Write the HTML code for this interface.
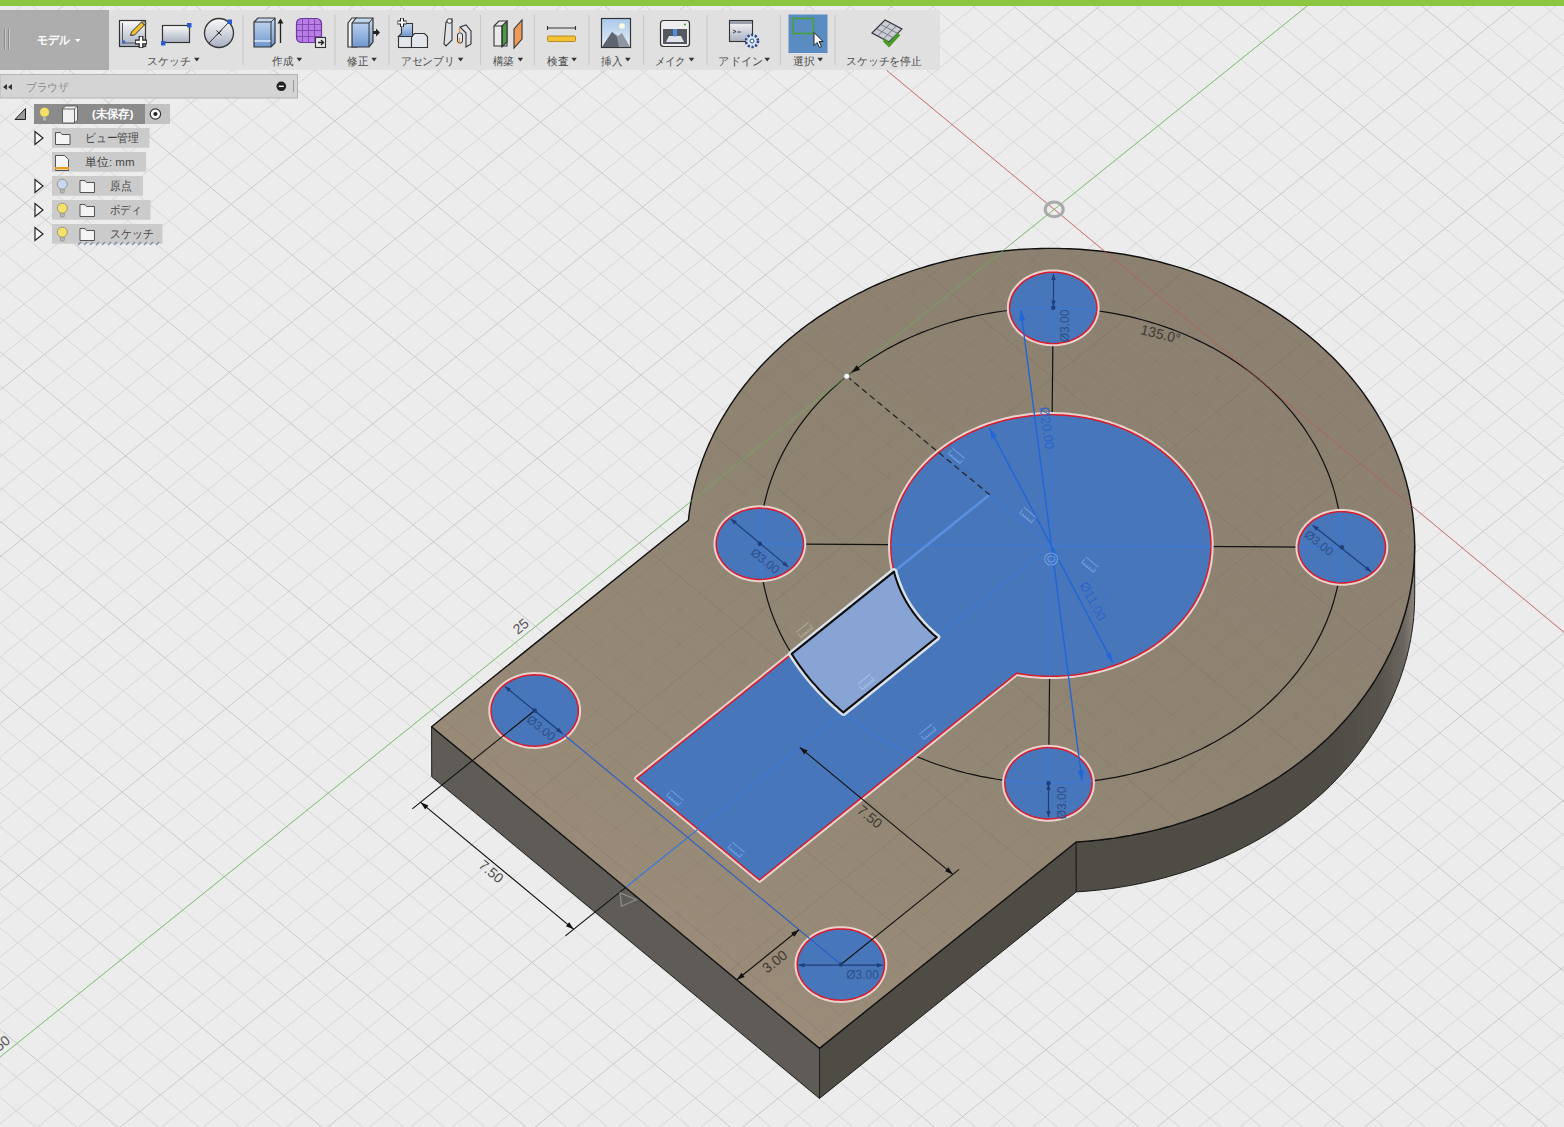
<!DOCTYPE html>
<html><head><meta charset="utf-8"><style>
html,body{margin:0;padding:0;width:1564px;height:1127px;overflow:hidden;background:#ececec;font-family:"Liberation Sans",sans-serif}
</style></head><body>
<svg width="1564" height="1127" viewBox="0 0 1564 1127" style="position:absolute;left:0;top:0">
<defs>
<clipPath id="topclip"><path d="M431.6 726.7 L819.5 1048.4 L1076.2 842 L1081.7 841.6 L1087.2 841.2 L1092.7 840.7 L1098.2 840.1 L1103.7 839.5 L1109.1 838.8 L1114.6 838.1 L1120 837.2 L1125.4 836.3 L1130.8 835.4 L1136.2 834.3 L1141.6 833.3 L1146.9 832.1 L1152.2 830.9 L1157.5 829.6 L1162.8 828.2 L1168.1 826.8 L1173.3 825.3 L1178.5 823.7 L1183.6 822.1 L1188.7 820.4 L1193.8 818.7 L1198.9 816.9 L1203.9 815 L1208.9 813.1 L1213.9 811.1 L1218.8 809 L1223.7 806.9 L1228.5 804.7 L1233.3 802.5 L1238.1 800.2 L1242.8 797.9 L1247.5 795.4 L1252.1 793 L1256.7 790.4 L1261.2 787.9 L1265.7 785.2 L1270.1 782.5 L1274.5 779.8 L1278.9 777 L1283.1 774.1 L1287.4 771.2 L1291.5 768.2 L1295.6 765.2 L1299.7 762.2 L1303.7 759 L1307.7 755.9 L1311.5 752.7 L1315.4 749.4 L1319.1 746.1 L1322.8 742.8 L1326.5 739.4 L1330 735.9 L1333.6 732.4 L1337 728.9 L1340.4 725.3 L1343.7 721.7 L1346.9 718.1 L1350.1 714.4 L1353.2 710.6 L1356.3 706.9 L1359.2 703 L1362.1 699.2 L1364.9 695.3 L1367.7 691.4 L1370.4 687.5 L1373 683.5 L1375.5 679.5 L1378 675.4 L1380.3 671.3 L1382.7 667.2 L1384.9 663.1 L1387 658.9 L1389.1 654.8 L1391.1 650.6 L1393 646.3 L1394.9 642.1 L1396.6 637.8 L1398.3 633.5 L1399.9 629.2 L1401.4 624.8 L1402.8 620.5 L1404.2 616.1 L1405.5 611.7 L1406.7 607.3 L1407.8 602.9 L1408.8 598.4 L1409.8 594 L1410.6 589.5 L1411.4 585.1 L1412.1 580.6 L1412.7 576.1 L1413.2 571.6 L1413.7 567.1 L1414 562.6 L1414.3 558.1 L1414.5 553.6 L1414.6 549.1 L1414.7 544.6 L1414.6 540 L1414.5 535.5 L1414.2 531 L1413.9 526.5 L1413.5 522 L1413.1 517.5 L1412.5 513 L1411.9 508.5 L1411.1 504.1 L1410.3 499.6 L1409.4 495.2 L1408.5 490.7 L1407.4 486.3 L1406.3 481.9 L1405 477.5 L1403.7 473.1 L1402.3 468.7 L1400.9 464.4 L1399.3 460 L1397.7 455.7 L1396 451.4 L1394.2 447.2 L1392.4 442.9 L1390.4 438.7 L1388.4 434.5 L1386.3 430.3 L1384.1 426.2 L1381.9 422 L1379.5 418 L1377.1 413.9 L1374.6 409.9 L1372.1 405.9 L1369.4 401.9 L1366.7 398 L1364 394.1 L1361.1 390.2 L1358.2 386.4 L1355.2 382.6 L1352.1 378.8 L1349 375.1 L1345.8 371.4 L1342.5 367.8 L1339.2 364.2 L1335.8 360.6 L1332.3 357.1 L1328.8 353.7 L1325.2 350.2 L1321.5 346.9 L1317.8 343.5 L1314 340.2 L1310.2 337 L1306.3 333.8 L1302.3 330.7 L1298.3 327.6 L1294.2 324.5 L1290.1 321.5 L1285.9 318.6 L1281.6 315.7 L1277.3 312.9 L1273 310.1 L1268.6 307.4 L1264.1 304.7 L1259.6 302.1 L1255.1 299.5 L1250.5 297 L1245.9 294.6 L1241.2 292.2 L1236.4 289.9 L1231.7 287.6 L1226.8 285.4 L1222 283.2 L1217.1 281.1 L1212.2 279.1 L1207.2 277.1 L1202.2 275.2 L1197.1 273.4 L1192.1 271.6 L1187 269.9 L1181.8 268.2 L1176.6 266.7 L1171.4 265.1 L1166.2 263.7 L1161 262.3 L1155.7 260.9 L1150.4 259.7 L1145.1 258.5 L1139.7 257.3 L1134.3 256.3 L1129 255.3 L1123.5 254.3 L1118.1 253.5 L1112.7 252.7 L1107.2 252 L1101.8 251.3 L1096.3 250.7 L1090.8 250.2 L1085.3 249.7 L1079.8 249.3 L1074.3 249 L1068.8 248.7 L1063.3 248.6 L1057.7 248.4 L1052.2 248.4 L1046.7 248.4 L1041.2 248.5 L1035.6 248.7 L1030.1 248.9 L1024.6 249.2 L1019.1 249.5 L1013.6 250 L1008.1 250.5 L1002.6 251 L997.1 251.7 L991.7 252.4 L986.2 253.2 L980.8 254 L975.4 254.9 L970 255.9 L964.6 256.9 L959.3 258 L953.9 259.2 L948.6 260.4 L943.3 261.7 L938.1 263.1 L932.8 264.5 L927.6 266 L922.4 267.6 L917.3 269.2 L912.1 270.9 L907.1 272.7 L902 274.5 L897 276.4 L892 278.3 L887 280.3 L882.1 282.4 L877.2 284.5 L872.4 286.7 L867.6 288.9 L862.9 291.3 L858.1 293.6 L853.5 296 L848.9 298.5 L844.3 301.1 L839.8 303.6 L835.3 306.3 L830.9 309 L826.5 311.8 L822.2 314.6 L817.9 317.4 L813.7 320.4 L809.5 323.3 L805.4 326.3 L801.4 329.4 L797.4 332.5 L793.4 335.7 L789.6 338.9 L785.7 342.2 L782 345.5 L778.3 348.9 L774.7 352.3 L771.1 355.7 L767.6 359.2 L764.2 362.8 L760.8 366.3 L757.5 370 L754.3 373.6 L751.1 377.3 L748 381.1 L745 384.8 L742 388.7 L739.1 392.5 L736.3 396.4 L733.6 400.3 L730.9 404.3 L728.3 408.3 L725.8 412.3 L723.4 416.3 L721 420.4 L718.7 424.5 L716.5 428.6 L714.3 432.8 L712.3 437 L710.3 441.2 L708.4 445.4 L706.6 449.7 L704.8 454 L703.2 458.3 L701.6 462.6 L700.1 467 L698.6 471.3 L697.3 475.7 L696 480.1 L694.9 484.5 L693.8 488.9 L692.7 493.4 L691.8 497.8 L691 502.3 L690.2 506.7 L689.5 511.2 L688.9 515.7 L688.4 520.2 L431.6 726.7 Z"/></clipPath>
<linearGradient id="cyl" x1="1076" y1="0" x2="1414" y2="0" gradientUnits="userSpaceOnUse"><stop offset="0" stop-color="#504c46"/><stop offset="0.75" stop-color="#4f4b45"/><stop offset="0.9" stop-color="#57534d"/><stop offset="0.97" stop-color="#6a665f"/><stop offset="1" stop-color="#8a857c"/></linearGradient><linearGradient id="topg" x1="1150" y1="260" x2="700" y2="1000" gradientUnits="userSpaceOnUse"><stop offset="0" stop-color="#8c8070"/><stop offset="0.45" stop-color="#8f8472"/><stop offset="1" stop-color="#9a8c79"/></linearGradient>
</defs>
<g fill="none">
<path d="M-739.7 551.5L795.5 -683.1M-719.3 568.4L815.9 -666.2M-698.9 585.3L836.4 -649.3M-658 619.2L877.2 -615.4M-637.6 636.1L897.6 -598.5M-617.2 653.1L918 -581.5M-596.8 670L938.4 -564.6M-556 703.9L979.2 -530.7M-535.6 720.8L999.7 -513.8M-515.2 737.7L1020.1 -496.9M-494.7 754.7L1040.5 -479.9M-453.9 788.5L1081.3 -446M-433.5 805.5L1101.7 -429.1M-413.1 822.4L1122.1 -412.2M-392.7 839.3L1142.5 -395.2M-351.9 873.2L1183.4 -361.4M-331.5 890.1L1203.8 -344.4M-311 907.1L1224.2 -327.5M-290.6 924L1244.6 -310.6M-249.8 957.9L1285.4 -276.7M-229.4 974.8L1305.8 -259.8M-209 991.7L1326.2 -242.8M-188.6 1008.7L1346.7 -225.9M-147.7 1042.5L1387.5 -192M-127.3 1059.5L1407.9 -175.1M-106.9 1076.4L1428.3 -158.2M-86.5 1093.3L1448.7 -141.2M-45.7 1127.2L1489.5 -107.4M-25.3 1144.1L1509.9 -90.4M-4.9 1161.1L1530.4 -73.5M15.5 1178L1550.8 -56.6M56.4 1211.9L1591.6 -22.7M76.8 1228.8L1612 -5.8M97.2 1245.8L1632.4 11.2M117.6 1262.7L1652.8 28.1M158.4 1296.6L1693.7 62M178.8 1313.5L1714.1 78.9M199.3 1330.4L1734.5 95.8M219.7 1347.4L1754.9 112.8M260.5 1381.2L1795.7 146.6M280.9 1398.2L1816.1 163.6M301.3 1415.1L1836.5 180.5M321.7 1432L1857 197.4M362.6 1465.9L1897.8 231.3M383 1482.8L1918.2 248.2M403.4 1499.8L1938.6 265.2M423.8 1516.7L1959 282.1M464.6 1550.6L1999.8 316M485 1567.5L2020.2 332.9M505.4 1584.4L2040.7 349.9M525.8 1601.4L2061.1 366.8M566.7 1635.2L2101.9 400.7M587.1 1652.2L2122.3 417.6M607.5 1669.1L2142.7 434.5M627.9 1686L2163.1 451.5M668.7 1719.9L2204 485.3M689.1 1736.8L2224.4 502.3M709.6 1753.8L2244.8 519.2M730 1770.7L2265.2 536.1M770.8 1804.6L2306 570M-739.7 551.5L770.8 1804.6M-718.9 534.8L791.5 1787.9M-698.2 518.1L812.3 1771.2M-677.5 501.4L833 1754.5M-636 468L874.5 1721.2M-615.2 451.4L895.3 1704.5M-594.5 434.7L916 1687.8M-573.7 418L936.8 1671.1M-532.2 384.6L978.3 1637.7M-511.5 367.9L999 1621.1M-490.7 351.3L1019.7 1604.4M-470 334.6L1040.5 1587.7M-428.5 301.2L1082 1554.3M-407.8 284.5L1102.7 1537.6M-387 267.8L1123.5 1521M-366.3 251.2L1144.2 1504.3M-324.8 217.8L1185.7 1470.9M-304 201.1L1206.5 1454.2M-283.3 184.4L1227.2 1437.5M-262.5 167.7L1248 1420.9M-221 134.4L1289.4 1387.5M-200.3 117.7L1310.2 1370.8M-179.5 101L1330.9 1354.1M-158.8 84.3L1351.7 1337.4M-117.3 50.9L1393.2 1304.1M-96.6 34.3L1413.9 1287.4M-75.8 17.6L1434.7 1270.7M-55.1 0.9L1455.4 1254M-13.6 -32.5L1496.9 1220.7M7.2 -49.2L1517.7 1204M27.9 -65.8L1538.4 1187.3M48.7 -82.5L1559.1 1170.6M90.2 -115.9L1600.6 1137.2M110.9 -132.6L1621.4 1120.5M131.7 -149.3L1642.1 1103.9M152.4 -165.9L1662.9 1087.2M193.9 -199.3L1704.4 1053.8M214.6 -216L1725.1 1037.1M235.4 -232.7L1745.9 1020.4M256.1 -249.4L1766.6 1003.8M297.6 -282.7L1808.1 970.4M318.4 -299.4L1828.8 953.7M339.1 -316.1L1849.6 937M359.9 -332.8L1870.3 920.3M401.4 -366.1L1911.8 887M422.1 -382.8L1932.6 870.3M442.8 -399.5L1953.3 853.6M463.6 -416.2L1974.1 836.9M505.1 -449.6L2015.6 803.6M525.8 -466.2L2036.3 786.9M546.6 -482.9L2057.1 770.2M567.3 -499.6L2077.8 753.5M608.8 -533L2119.3 720.1M629.6 -549.7L2140 703.5M650.3 -566.3L2160.8 686.8M671.1 -583L2181.5 670.1M712.5 -616.4L2223 636.7M733.3 -633.1L2243.8 620M754 -649.8L2264.5 603.4M774.8 -666.4L2285.3 586.7" stroke="#d7d7d7" stroke-width="1"/>
<path d="M-678.5 602.3L856.8 -632.3M-576.4 686.9L958.8 -547.7M-474.3 771.6L1060.9 -463M-372.3 856.3L1162.9 -378.3M-270.2 940.9L1265 -293.6M-168.2 1025.6L1367.1 -209M-66.1 1110.3L1469.1 -124.3M36 1194.9L1571.2 -39.6M138 1279.6L1673.2 45M240.1 1364.3L1775.3 129.7M342.1 1449L1877.4 214.4M444.2 1533.6L1979.4 299M546.3 1618.3L2081.5 383.7M648.3 1703L2183.5 468.4M750.4 1787.6L2285.6 553.1M-656.7 484.7L853.8 1737.8M-553 401.3L957.5 1654.4M-449.2 317.9L1061.2 1571M-345.5 234.5L1165 1487.6M-241.8 151.1L1268.7 1404.2M-138 67.6L1372.4 1320.8M-34.3 -15.8L1476.2 1237.3M69.4 -99.2L1579.9 1153.9M173.1 -182.6L1683.6 1070.5M276.9 -266L1787.4 987.1M380.6 -349.5L1891.1 903.7M484.3 -432.9L1994.8 820.2M588.1 -516.3L2098.5 736.8M691.8 -599.7L2202.3 653.4M795.5 -683.1L2306 570" stroke="#c9c9c9" stroke-width="1"/>
</g>
<path d="M431.6 726.7 L819.5 1048.4 L819.5 1098.4 L431.7 776.6 Z" fill="#5f5c57" stroke="#1e1e1e" stroke-width="1"/>
<path d="M819.5 1048.4 L1076.2 842 L1076.3 891.9 L819.5 1098.4 Z" fill="#4f4b45" stroke="#1e1e1e" stroke-width="1"/>
<path d="M1076.2 842 L1083 841.5 L1089.8 841 L1096.6 840.3 L1103.4 839.6 L1110.1 838.7 L1116.8 837.7 L1123.5 836.7 L1130.2 835.5 L1136.9 834.2 L1143.5 832.9 L1150.1 831.4 L1156.6 829.8 L1163.1 828.1 L1169.6 826.4 L1176 824.5 L1182.4 822.5 L1188.8 820.4 L1195 818.3 L1201.3 816 L1207.5 813.7 L1213.6 811.2 L1219.7 808.7 L1225.7 806 L1231.7 803.3 L1237.5 800.5 L1243.4 797.6 L1249.1 794.6 L1254.8 791.5 L1260.4 788.3 L1266 785.1 L1271.4 781.7 L1276.8 778.3 L1282.1 774.8 L1287.4 771.2 L1292.5 767.5 L1297.6 763.8 L1302.5 760 L1307.4 756.1 L1312.2 752.1 L1316.9 748.1 L1321.5 743.9 L1326 739.8 L1330.5 735.5 L1334.8 731.2 L1339 726.8 L1343.1 722.3 L1347.1 717.8 L1351 713.3 L1354.8 708.6 L1358.5 703.9 L1362.1 699.2 L1365.6 694.4 L1369 689.5 L1372.2 684.6 L1375.4 679.7 L1378.4 674.7 L1381.3 669.7 L1384.1 664.6 L1386.8 659.4 L1389.3 654.3 L1391.8 649.1 L1394.1 643.8 L1396.3 638.5 L1398.4 633.2 L1400.3 627.9 L1402.2 622.5 L1403.9 617.1 L1405.5 611.7 L1406.9 606.2 L1408.3 600.8 L1409.5 595.3 L1410.6 589.8 L1411.5 584.3 L1412.4 578.7 L1413.1 573.2 L1413.6 567.6 L1414.1 562.1 L1414.4 556.5 L1414.6 550.9 L1414.7 545.3 L1414.7 595.3 L1414.6 600.9 L1414.4 606.5 L1414.1 612 L1413.7 617.6 L1413.1 623.1 L1412.4 628.7 L1411.5 634.2 L1410.6 639.7 L1409.5 645.3 L1408.3 650.7 L1407 656.2 L1405.5 661.7 L1403.9 667.1 L1402.2 672.5 L1400.4 677.8 L1398.4 683.2 L1396.3 688.5 L1394.1 693.8 L1391.8 699 L1389.4 704.2 L1386.8 709.4 L1384.1 714.5 L1381.3 719.6 L1378.4 724.7 L1375.4 729.7 L1372.2 734.6 L1369 739.5 L1365.6 744.4 L1362.1 749.2 L1358.6 753.9 L1354.9 758.6 L1351.1 763.2 L1347.1 767.8 L1343.1 772.3 L1339 776.8 L1334.8 781.1 L1330.5 785.5 L1326.1 789.7 L1321.6 793.9 L1316.9 798 L1312.2 802.1 L1307.5 806 L1302.6 809.9 L1297.6 813.8 L1292.5 817.5 L1287.4 821.2 L1282.2 824.8 L1276.9 828.3 L1271.5 831.7 L1266 835 L1260.5 838.3 L1254.8 841.5 L1249.2 844.5 L1243.4 847.5 L1237.6 850.4 L1231.7 853.3 L1225.7 856 L1219.7 858.6 L1213.6 861.2 L1207.5 863.6 L1201.3 866 L1195.1 868.2 L1188.8 870.4 L1182.4 872.5 L1176 874.4 L1169.6 876.3 L1163.1 878.1 L1156.6 879.8 L1150.1 881.3 L1143.5 882.8 L1136.9 884.2 L1130.2 885.5 L1123.6 886.6 L1116.9 887.7 L1110.1 888.7 L1103.4 889.5 L1096.6 890.3 L1089.8 890.9 L1083.1 891.5 L1076.3 891.9 Z" fill="url(#cyl)" stroke="#1e1e1e" stroke-width="1"/>
<path d="M431.6 726.7 L819.5 1048.4 L1076.2 842 L1081.7 841.6 L1087.2 841.2 L1092.7 840.7 L1098.2 840.1 L1103.7 839.5 L1109.1 838.8 L1114.6 838.1 L1120 837.2 L1125.4 836.3 L1130.8 835.4 L1136.2 834.3 L1141.6 833.3 L1146.9 832.1 L1152.2 830.9 L1157.5 829.6 L1162.8 828.2 L1168.1 826.8 L1173.3 825.3 L1178.5 823.7 L1183.6 822.1 L1188.7 820.4 L1193.8 818.7 L1198.9 816.9 L1203.9 815 L1208.9 813.1 L1213.9 811.1 L1218.8 809 L1223.7 806.9 L1228.5 804.7 L1233.3 802.5 L1238.1 800.2 L1242.8 797.9 L1247.5 795.4 L1252.1 793 L1256.7 790.4 L1261.2 787.9 L1265.7 785.2 L1270.1 782.5 L1274.5 779.8 L1278.9 777 L1283.1 774.1 L1287.4 771.2 L1291.5 768.2 L1295.6 765.2 L1299.7 762.2 L1303.7 759 L1307.7 755.9 L1311.5 752.7 L1315.4 749.4 L1319.1 746.1 L1322.8 742.8 L1326.5 739.4 L1330 735.9 L1333.6 732.4 L1337 728.9 L1340.4 725.3 L1343.7 721.7 L1346.9 718.1 L1350.1 714.4 L1353.2 710.6 L1356.3 706.9 L1359.2 703 L1362.1 699.2 L1364.9 695.3 L1367.7 691.4 L1370.4 687.5 L1373 683.5 L1375.5 679.5 L1378 675.4 L1380.3 671.3 L1382.7 667.2 L1384.9 663.1 L1387 658.9 L1389.1 654.8 L1391.1 650.6 L1393 646.3 L1394.9 642.1 L1396.6 637.8 L1398.3 633.5 L1399.9 629.2 L1401.4 624.8 L1402.8 620.5 L1404.2 616.1 L1405.5 611.7 L1406.7 607.3 L1407.8 602.9 L1408.8 598.4 L1409.8 594 L1410.6 589.5 L1411.4 585.1 L1412.1 580.6 L1412.7 576.1 L1413.2 571.6 L1413.7 567.1 L1414 562.6 L1414.3 558.1 L1414.5 553.6 L1414.6 549.1 L1414.7 544.6 L1414.6 540 L1414.5 535.5 L1414.2 531 L1413.9 526.5 L1413.5 522 L1413.1 517.5 L1412.5 513 L1411.9 508.5 L1411.1 504.1 L1410.3 499.6 L1409.4 495.2 L1408.5 490.7 L1407.4 486.3 L1406.3 481.9 L1405 477.5 L1403.7 473.1 L1402.3 468.7 L1400.9 464.4 L1399.3 460 L1397.7 455.7 L1396 451.4 L1394.2 447.2 L1392.4 442.9 L1390.4 438.7 L1388.4 434.5 L1386.3 430.3 L1384.1 426.2 L1381.9 422 L1379.5 418 L1377.1 413.9 L1374.6 409.9 L1372.1 405.9 L1369.4 401.9 L1366.7 398 L1364 394.1 L1361.1 390.2 L1358.2 386.4 L1355.2 382.6 L1352.1 378.8 L1349 375.1 L1345.8 371.4 L1342.5 367.8 L1339.2 364.2 L1335.8 360.6 L1332.3 357.1 L1328.8 353.7 L1325.2 350.2 L1321.5 346.9 L1317.8 343.5 L1314 340.2 L1310.2 337 L1306.3 333.8 L1302.3 330.7 L1298.3 327.6 L1294.2 324.5 L1290.1 321.5 L1285.9 318.6 L1281.6 315.7 L1277.3 312.9 L1273 310.1 L1268.6 307.4 L1264.1 304.7 L1259.6 302.1 L1255.1 299.5 L1250.5 297 L1245.9 294.6 L1241.2 292.2 L1236.4 289.9 L1231.7 287.6 L1226.8 285.4 L1222 283.2 L1217.1 281.1 L1212.2 279.1 L1207.2 277.1 L1202.2 275.2 L1197.1 273.4 L1192.1 271.6 L1187 269.9 L1181.8 268.2 L1176.6 266.7 L1171.4 265.1 L1166.2 263.7 L1161 262.3 L1155.7 260.9 L1150.4 259.7 L1145.1 258.5 L1139.7 257.3 L1134.3 256.3 L1129 255.3 L1123.5 254.3 L1118.1 253.5 L1112.7 252.7 L1107.2 252 L1101.8 251.3 L1096.3 250.7 L1090.8 250.2 L1085.3 249.7 L1079.8 249.3 L1074.3 249 L1068.8 248.7 L1063.3 248.6 L1057.7 248.4 L1052.2 248.4 L1046.7 248.4 L1041.2 248.5 L1035.6 248.7 L1030.1 248.9 L1024.6 249.2 L1019.1 249.5 L1013.6 250 L1008.1 250.5 L1002.6 251 L997.1 251.7 L991.7 252.4 L986.2 253.2 L980.8 254 L975.4 254.9 L970 255.9 L964.6 256.9 L959.3 258 L953.9 259.2 L948.6 260.4 L943.3 261.7 L938.1 263.1 L932.8 264.5 L927.6 266 L922.4 267.6 L917.3 269.2 L912.1 270.9 L907.1 272.7 L902 274.5 L897 276.4 L892 278.3 L887 280.3 L882.1 282.4 L877.2 284.5 L872.4 286.7 L867.6 288.9 L862.9 291.3 L858.1 293.6 L853.5 296 L848.9 298.5 L844.3 301.1 L839.8 303.6 L835.3 306.3 L830.9 309 L826.5 311.8 L822.2 314.6 L817.9 317.4 L813.7 320.4 L809.5 323.3 L805.4 326.3 L801.4 329.4 L797.4 332.5 L793.4 335.7 L789.6 338.9 L785.7 342.2 L782 345.5 L778.3 348.9 L774.7 352.3 L771.1 355.7 L767.6 359.2 L764.2 362.8 L760.8 366.3 L757.5 370 L754.3 373.6 L751.1 377.3 L748 381.1 L745 384.8 L742 388.7 L739.1 392.5 L736.3 396.4 L733.6 400.3 L730.9 404.3 L728.3 408.3 L725.8 412.3 L723.4 416.3 L721 420.4 L718.7 424.5 L716.5 428.6 L714.3 432.8 L712.3 437 L710.3 441.2 L708.4 445.4 L706.6 449.7 L704.8 454 L703.2 458.3 L701.6 462.6 L700.1 467 L698.6 471.3 L697.3 475.7 L696 480.1 L694.9 484.5 L693.8 488.9 L692.7 493.4 L691.8 497.8 L691 502.3 L690.2 506.7 L689.5 511.2 L688.9 515.7 L688.4 520.2 L431.6 726.7 Z" fill="url(#topg)"/>
<g clip-path="url(#topclip)" fill="none">
<path d="M-739.7 551.5L795.5 -683.1M-719.3 568.4L815.9 -666.2M-698.9 585.3L836.4 -649.3M-658 619.2L877.2 -615.4M-637.6 636.1L897.6 -598.5M-617.2 653.1L918 -581.5M-596.8 670L938.4 -564.6M-556 703.9L979.2 -530.7M-535.6 720.8L999.7 -513.8M-515.2 737.7L1020.1 -496.9M-494.7 754.7L1040.5 -479.9M-453.9 788.5L1081.3 -446M-433.5 805.5L1101.7 -429.1M-413.1 822.4L1122.1 -412.2M-392.7 839.3L1142.5 -395.2M-351.9 873.2L1183.4 -361.4M-331.5 890.1L1203.8 -344.4M-311 907.1L1224.2 -327.5M-290.6 924L1244.6 -310.6M-249.8 957.9L1285.4 -276.7M-229.4 974.8L1305.8 -259.8M-209 991.7L1326.2 -242.8M-188.6 1008.7L1346.7 -225.9M-147.7 1042.5L1387.5 -192M-127.3 1059.5L1407.9 -175.1M-106.9 1076.4L1428.3 -158.2M-86.5 1093.3L1448.7 -141.2M-45.7 1127.2L1489.5 -107.4M-25.3 1144.1L1509.9 -90.4M-4.9 1161.1L1530.4 -73.5M15.5 1178L1550.8 -56.6M56.4 1211.9L1591.6 -22.7M76.8 1228.8L1612 -5.8M97.2 1245.8L1632.4 11.2M117.6 1262.7L1652.8 28.1M158.4 1296.6L1693.7 62M178.8 1313.5L1714.1 78.9M199.3 1330.4L1734.5 95.8M219.7 1347.4L1754.9 112.8M260.5 1381.2L1795.7 146.6M280.9 1398.2L1816.1 163.6M301.3 1415.1L1836.5 180.5M321.7 1432L1857 197.4M362.6 1465.9L1897.8 231.3M383 1482.8L1918.2 248.2M403.4 1499.8L1938.6 265.2M423.8 1516.7L1959 282.1M464.6 1550.6L1999.8 316M485 1567.5L2020.2 332.9M505.4 1584.4L2040.7 349.9M525.8 1601.4L2061.1 366.8M566.7 1635.2L2101.9 400.7M587.1 1652.2L2122.3 417.6M607.5 1669.1L2142.7 434.5M627.9 1686L2163.1 451.5M668.7 1719.9L2204 485.3M689.1 1736.8L2224.4 502.3M709.6 1753.8L2244.8 519.2M730 1770.7L2265.2 536.1M770.8 1804.6L2306 570M-739.7 551.5L770.8 1804.6M-718.9 534.8L791.5 1787.9M-698.2 518.1L812.3 1771.2M-677.5 501.4L833 1754.5M-636 468L874.5 1721.2M-615.2 451.4L895.3 1704.5M-594.5 434.7L916 1687.8M-573.7 418L936.8 1671.1M-532.2 384.6L978.3 1637.7M-511.5 367.9L999 1621.1M-490.7 351.3L1019.7 1604.4M-470 334.6L1040.5 1587.7M-428.5 301.2L1082 1554.3M-407.8 284.5L1102.7 1537.6M-387 267.8L1123.5 1521M-366.3 251.2L1144.2 1504.3M-324.8 217.8L1185.7 1470.9M-304 201.1L1206.5 1454.2M-283.3 184.4L1227.2 1437.5M-262.5 167.7L1248 1420.9M-221 134.4L1289.4 1387.5M-200.3 117.7L1310.2 1370.8M-179.5 101L1330.9 1354.1M-158.8 84.3L1351.7 1337.4M-117.3 50.9L1393.2 1304.1M-96.6 34.3L1413.9 1287.4M-75.8 17.6L1434.7 1270.7M-55.1 0.9L1455.4 1254M-13.6 -32.5L1496.9 1220.7M7.2 -49.2L1517.7 1204M27.9 -65.8L1538.4 1187.3M48.7 -82.5L1559.1 1170.6M90.2 -115.9L1600.6 1137.2M110.9 -132.6L1621.4 1120.5M131.7 -149.3L1642.1 1103.9M152.4 -165.9L1662.9 1087.2M193.9 -199.3L1704.4 1053.8M214.6 -216L1725.1 1037.1M235.4 -232.7L1745.9 1020.4M256.1 -249.4L1766.6 1003.8M297.6 -282.7L1808.1 970.4M318.4 -299.4L1828.8 953.7M339.1 -316.1L1849.6 937M359.9 -332.8L1870.3 920.3M401.4 -366.1L1911.8 887M422.1 -382.8L1932.6 870.3M442.8 -399.5L1953.3 853.6M463.6 -416.2L1974.1 836.9M505.1 -449.6L2015.6 803.6M525.8 -466.2L2036.3 786.9M546.6 -482.9L2057.1 770.2M567.3 -499.6L2077.8 753.5M608.8 -533L2119.3 720.1M629.6 -549.7L2140 703.5M650.3 -566.3L2160.8 686.8M671.1 -583L2181.5 670.1M712.5 -616.4L2223 636.7M733.3 -633.1L2243.8 620M754 -649.8L2264.5 603.4M774.8 -666.4L2285.3 586.7" stroke="rgba(40,30,20,0.04)" stroke-width="1"/>
<path d="M-678.5 602.3L856.8 -632.3M-576.4 686.9L958.8 -547.7M-474.3 771.6L1060.9 -463M-372.3 856.3L1162.9 -378.3M-270.2 940.9L1265 -293.6M-168.2 1025.6L1367.1 -209M-66.1 1110.3L1469.1 -124.3M36 1194.9L1571.2 -39.6M138 1279.6L1673.2 45M240.1 1364.3L1775.3 129.7M342.1 1449L1877.4 214.4M444.2 1533.6L1979.4 299M546.3 1618.3L2081.5 383.7M648.3 1703L2183.5 468.4M750.4 1787.6L2285.6 553.1M-656.7 484.7L853.8 1737.8M-553 401.3L957.5 1654.4M-449.2 317.9L1061.2 1571M-345.5 234.5L1165 1487.6M-241.8 151.1L1268.7 1404.2M-138 67.6L1372.4 1320.8M-34.3 -15.8L1476.2 1237.3M69.4 -99.2L1579.9 1153.9M173.1 -182.6L1683.6 1070.5M276.9 -266L1787.4 987.1M380.6 -349.5L1891.1 903.7M484.3 -432.9L1994.8 820.2M588.1 -516.3L2098.5 736.8M691.8 -599.7L2202.3 653.4M795.5 -683.1L2306 570" stroke="rgba(40,30,20,0.08)" stroke-width="1"/>
</g>
<path d="M1255 714.9 L1260.3 710.5 L1265.6 705.9 L1270.6 701.3 L1275.5 696.5 L1280.3 691.7 L1284.9 686.7 L1289.4 681.6 L1293.6 676.5 L1297.8 671.3 L1301.7 665.9 L1305.5 660.5 L1309.1 655 L1312.5 649.5 L1315.8 643.8 L1318.8 638.1 L1321.7 632.4 L1324.4 626.6 L1326.9 620.7 L1329.2 614.8 L1331.4 608.8 L1333.3 602.8 L1335 596.7 L1336.6 590.6 L1337.9 584.5 L1339.1 578.3 L1340 572.2 L1340.8 566 L1341.4 559.8 L1341.7 553.5 L1341.9 547.3 L1341.9 541.1 L1341.6 534.9 L1341.2 528.7 L1340.5 522.5 L1339.7 516.3 L1338.7 510.1 L1337.4 504 L1336 497.9 L1334.4 491.8 L1332.6 485.7 L1330.6 479.7 L1328.4 473.8 L1326 467.9 L1323.4 462 L1320.6 456.2 L1317.7 450.5 L1314.6 444.8 L1311.2 439.2 L1307.7 433.7 L1304.1 428.2 L1300.2 422.9 L1296.2 417.6 L1292 412.4 L1287.7 407.3 L1283.2 402.2 L1278.5 397.3 L1273.7 392.5 L1268.7 387.8 L1263.6 383.2 L1258.3 378.7 L1252.9 374.3 L1247.4 370.1 L1241.7 365.9 L1235.8 361.9 L1229.9 358 L1223.8 354.3 L1217.6 350.6 L1211.3 347.1 L1204.9 343.8 L1198.4 340.6 L1191.8 337.5 L1185.1 334.5 L1178.3 331.8 L1171.4 329.1 L1164.4 326.6 L1157.4 324.3 L1150.2 322.1 L1143 320 L1135.8 318.1 L1128.5 316.4 L1121.1 314.8 L1113.7 313.4 L1106.2 312.1 L1098.7 311 L1091.2 310.1 L1083.6 309.3 L1076 308.7 L1068.4 308.3 L1060.8 308 L1053.2 307.8 L1045.6 307.9 L1038 308.1 L1030.4 308.4 L1022.8 308.9 L1015.2 309.6 L1007.7 310.5 L1000.1 311.5 L992.7 312.7 L985.2 314 L977.8 315.5 L970.5 317.1 L963.2 318.9 L955.9 320.9 L948.8 323 L941.7 325.2 L934.6 327.7 L927.7 330.2 L920.8 332.9 L914.1 335.8 L907.4 338.8 L900.8 341.9 L894.3 345.2 L888 348.6 L881.7 352.2 L875.6 355.9 L869.5 359.7 L863.6 363.6 L857.9 367.7 L852.2 371.9 L846.7 376.2 L841.4 380.6 L836.2 385.2 L831.1 389.8 L826.2 394.6 L821.4 399.4 L816.8 404.4 L812.3 409.4 L808.1 414.6 L803.9 419.8 L800 425.2 L796.2 430.6 L792.6 436 L789.2 441.6 L785.9 447.2 L782.9 452.9 L780 458.7 L777.3 464.5 L774.8 470.4 L772.5 476.3 L770.4 482.3 L768.4 488.3 L766.7 494.4 L765.1 500.5 L763.8 506.6 L762.6 512.8 L761.7 518.9 L760.9 525.1 L760.3 531.3 L760 537.6 L759.8 543.8 L759.9 550 L760.1 556.2 L760.5 562.4 L761.2 568.6 L762 574.8 L763 581 L764.3 587.1 L765.7 593.2 L767.3 599.3 L769.1 605.4 L771.1 611.4 L773.3 617.3 L775.7 623.2 L778.3 629.1 L781.1 634.9 L784 640.6 L787.2 646.3 L790.5 651.9 L794 657.4 L797.6 662.9 L801.5 668.2 L805.5 673.5 L809.7 678.7 L814 683.8 L818.5 688.8 L823.2 693.8 L828 698.6 L833 703.3 L838.1 707.9 L843.4 712.4 L848.8 716.8 L854.4 721 L860 725.2 L865.9 729.2 L871.8 733.1 L877.9 736.8 L884.1 740.4 L890.4 743.9 L896.8 747.3 L903.3 750.5 L909.9 753.6 L916.6 756.5 L923.4 759.3 L930.3 762 L937.3 764.5 L944.4 766.8 L951.5 769 L958.7 771.1 L965.9 773 L973.2 774.7 L980.6 776.3 L988 777.7 L995.5 779 L1003 780.1 L1010.5 781 L1018.1 781.8 L1025.7 782.4 L1033.3 782.8 L1040.9 783.1 L1048.5 783.3 L1056.1 783.2 L1063.7 783 L1071.3 782.7 L1078.9 782.1 L1086.5 781.5 L1094 780.6 L1101.6 779.6 L1109.1 778.4 L1116.5 777.1 L1123.9 775.6 L1131.2 774 L1138.5 772.2 L1145.8 770.2 L1152.9 768.1 L1160 765.8 L1167.1 763.4 L1174 760.9 L1180.9 758.2 L1187.6 755.3 L1194.3 752.3 L1200.9 749.2 L1207.4 745.9 L1213.8 742.5 L1220 738.9 L1226.1 735.2 L1232.2 731.4 L1238.1 727.5 L1243.8 723.4 L1249.5 719.2 L1255 714.9 Z" fill="none" stroke="#111" stroke-width="1.2"/>
<path d="M1050.9 545.5L1341.9 547.3" stroke="#111" stroke-width="1.2"/>
<path d="M1050.9 545.5L1053.2 307.8" stroke="#111" stroke-width="1.2"/>
<path d="M1050.9 545.5L759.8 543.8" stroke="#111" stroke-width="1.2"/>
<path d="M1050.9 545.5L1048.5 783.3" stroke="#111" stroke-width="1.2"/>
<path d="M636.9 778.4 L759.4 880 L1016.5 673.3 L1019.8 673.8 L1023.2 674.3 L1026.5 674.8 L1029.9 675.2 L1033.3 675.5 L1036.7 675.8 L1040.1 676 L1043.6 676.2 L1047 676.3 L1050.4 676.3 L1053.8 676.3 L1057.2 676.2 L1060.7 676 L1064.1 675.8 L1067.5 675.6 L1070.9 675.3 L1074.3 674.9 L1077.6 674.4 L1081 673.9 L1084.4 673.4 L1087.7 672.8 L1091 672.1 L1094.3 671.4 L1097.6 670.6 L1100.9 669.7 L1104.1 668.8 L1107.3 667.9 L1110.5 666.8 L1113.7 665.8 L1116.8 664.6 L1119.9 663.5 L1123 662.2 L1126 660.9 L1129 659.6 L1132 658.2 L1134.9 656.8 L1137.8 655.3 L1140.7 653.7 L1143.5 652.1 L1146.2 650.5 L1149 648.8 L1151.6 647.1 L1154.3 645.3 L1156.9 643.5 L1159.4 641.6 L1161.9 639.7 L1164.3 637.7 L1166.7 635.7 L1169 633.7 L1171.3 631.6 L1173.6 629.4 L1175.7 627.3 L1177.8 625.1 L1179.9 622.8 L1181.9 620.6 L1183.8 618.3 L1185.7 615.9 L1187.5 613.6 L1189.3 611.2 L1190.9 608.7 L1192.6 606.3 L1194.1 603.8 L1195.6 601.3 L1197 598.7 L1198.4 596.2 L1199.7 593.6 L1200.9 591 L1202.1 588.3 L1203.2 585.7 L1204.2 583 L1205.1 580.3 L1206 577.6 L1206.8 574.9 L1207.5 572.2 L1208.2 569.4 L1208.8 566.7 L1209.3 563.9 L1209.8 561.2 L1210.1 558.4 L1210.4 555.6 L1210.7 552.8 L1210.8 550 L1210.9 547.2 L1210.9 544.4 L1210.9 541.6 L1210.7 538.8 L1210.5 536.1 L1210.2 533.3 L1209.9 530.5 L1209.4 527.7 L1208.9 525 L1208.4 522.2 L1207.7 519.5 L1207 516.7 L1206.2 514 L1205.4 511.3 L1204.4 508.6 L1203.4 505.9 L1202.4 503.3 L1201.2 500.6 L1200 498 L1198.8 495.4 L1197.4 492.9 L1196 490.3 L1194.5 487.8 L1193 485.3 L1191.4 482.8 L1189.7 480.4 L1188 478 L1186.2 475.6 L1184.3 473.3 L1182.4 471 L1180.4 468.7 L1178.4 466.4 L1176.3 464.2 L1174.1 462.1 L1171.9 459.9 L1169.7 457.8 L1167.3 455.8 L1165 453.8 L1162.5 451.8 L1160.1 449.9 L1157.5 448 L1155 446.2 L1152.3 444.4 L1149.7 442.6 L1147 440.9 L1144.2 439.3 L1141.4 437.7 L1138.6 436.1 L1135.7 434.6 L1132.8 433.2 L1129.8 431.8 L1126.8 430.4 L1123.8 429.1 L1120.7 427.9 L1117.6 426.7 L1114.5 425.5 L1111.3 424.5 L1108.2 423.4 L1104.9 422.5 L1101.7 421.5 L1098.5 420.7 L1095.2 419.9 L1091.9 419.1 L1088.6 418.5 L1085.2 417.8 L1081.9 417.3 L1078.5 416.8 L1075.2 416.3 L1071.8 415.9 L1068.4 415.6 L1065 415.3 L1061.6 415.1 L1058.1 414.9 L1054.7 414.8 L1051.3 414.8 L1047.9 414.8 L1044.5 414.9 L1041 415.1 L1037.6 415.3 L1034.2 415.5 L1030.8 415.8 L1027.4 416.2 L1024.1 416.7 L1020.7 417.2 L1017.3 417.7 L1014 418.3 L1010.7 419 L1007.4 419.7 L1004.1 420.5 L1000.8 421.4 L997.6 422.3 L994.4 423.2 L991.2 424.3 L988 425.3 L984.9 426.4 L981.8 427.6 L978.7 428.9 L975.7 430.2 L972.7 431.5 L969.7 432.9 L966.8 434.3 L963.9 435.8 L961 437.4 L958.2 439 L955.5 440.6 L952.7 442.3 L950.1 444 L947.4 445.8 L944.8 447.6 L942.3 449.5 L939.8 451.4 L937.4 453.4 L935 455.4 L932.7 457.4 L930.4 459.5 L928.1 461.7 L926 463.8 L923.9 466 L921.8 468.3 L919.8 470.5 L917.9 472.8 L916 475.2 L914.2 477.5 L912.4 479.9 L910.8 482.4 L909.1 484.8 L907.6 487.3 L906.1 489.8 L904.7 492.4 L903.3 494.9 L902 497.5 L900.8 500.1 L899.6 502.8 L898.5 505.4 L897.5 508.1 L896.6 510.8 L895.7 513.5 L894.9 516.2 L894.2 518.9 L893.5 521.7 L892.9 524.4 L892.4 527.2 L891.9 529.9 L891.6 532.7 L891.3 535.5 L891 538.3 L890.9 541.1 L890.8 543.9 L890.8 546.7 L890.9 549.5 L891 552.3 L891.2 555.1 L891.5 557.8 L891.8 560.6 L892.3 563.4 L892.8 566.2 L893.3 568.9 L894 571.6 L636.9 778.4 Z" fill="none" stroke="#ead2cc" stroke-width="5.5" stroke-linejoin="round"/><path d="M636.9 778.4 L759.4 880 L1016.5 673.3 L1019.8 673.8 L1023.2 674.3 L1026.5 674.8 L1029.9 675.2 L1033.3 675.5 L1036.7 675.8 L1040.1 676 L1043.6 676.2 L1047 676.3 L1050.4 676.3 L1053.8 676.3 L1057.2 676.2 L1060.7 676 L1064.1 675.8 L1067.5 675.6 L1070.9 675.3 L1074.3 674.9 L1077.6 674.4 L1081 673.9 L1084.4 673.4 L1087.7 672.8 L1091 672.1 L1094.3 671.4 L1097.6 670.6 L1100.9 669.7 L1104.1 668.8 L1107.3 667.9 L1110.5 666.8 L1113.7 665.8 L1116.8 664.6 L1119.9 663.5 L1123 662.2 L1126 660.9 L1129 659.6 L1132 658.2 L1134.9 656.8 L1137.8 655.3 L1140.7 653.7 L1143.5 652.1 L1146.2 650.5 L1149 648.8 L1151.6 647.1 L1154.3 645.3 L1156.9 643.5 L1159.4 641.6 L1161.9 639.7 L1164.3 637.7 L1166.7 635.7 L1169 633.7 L1171.3 631.6 L1173.6 629.4 L1175.7 627.3 L1177.8 625.1 L1179.9 622.8 L1181.9 620.6 L1183.8 618.3 L1185.7 615.9 L1187.5 613.6 L1189.3 611.2 L1190.9 608.7 L1192.6 606.3 L1194.1 603.8 L1195.6 601.3 L1197 598.7 L1198.4 596.2 L1199.7 593.6 L1200.9 591 L1202.1 588.3 L1203.2 585.7 L1204.2 583 L1205.1 580.3 L1206 577.6 L1206.8 574.9 L1207.5 572.2 L1208.2 569.4 L1208.8 566.7 L1209.3 563.9 L1209.8 561.2 L1210.1 558.4 L1210.4 555.6 L1210.7 552.8 L1210.8 550 L1210.9 547.2 L1210.9 544.4 L1210.9 541.6 L1210.7 538.8 L1210.5 536.1 L1210.2 533.3 L1209.9 530.5 L1209.4 527.7 L1208.9 525 L1208.4 522.2 L1207.7 519.5 L1207 516.7 L1206.2 514 L1205.4 511.3 L1204.4 508.6 L1203.4 505.9 L1202.4 503.3 L1201.2 500.6 L1200 498 L1198.8 495.4 L1197.4 492.9 L1196 490.3 L1194.5 487.8 L1193 485.3 L1191.4 482.8 L1189.7 480.4 L1188 478 L1186.2 475.6 L1184.3 473.3 L1182.4 471 L1180.4 468.7 L1178.4 466.4 L1176.3 464.2 L1174.1 462.1 L1171.9 459.9 L1169.7 457.8 L1167.3 455.8 L1165 453.8 L1162.5 451.8 L1160.1 449.9 L1157.5 448 L1155 446.2 L1152.3 444.4 L1149.7 442.6 L1147 440.9 L1144.2 439.3 L1141.4 437.7 L1138.6 436.1 L1135.7 434.6 L1132.8 433.2 L1129.8 431.8 L1126.8 430.4 L1123.8 429.1 L1120.7 427.9 L1117.6 426.7 L1114.5 425.5 L1111.3 424.5 L1108.2 423.4 L1104.9 422.5 L1101.7 421.5 L1098.5 420.7 L1095.2 419.9 L1091.9 419.1 L1088.6 418.5 L1085.2 417.8 L1081.9 417.3 L1078.5 416.8 L1075.2 416.3 L1071.8 415.9 L1068.4 415.6 L1065 415.3 L1061.6 415.1 L1058.1 414.9 L1054.7 414.8 L1051.3 414.8 L1047.9 414.8 L1044.5 414.9 L1041 415.1 L1037.6 415.3 L1034.2 415.5 L1030.8 415.8 L1027.4 416.2 L1024.1 416.7 L1020.7 417.2 L1017.3 417.7 L1014 418.3 L1010.7 419 L1007.4 419.7 L1004.1 420.5 L1000.8 421.4 L997.6 422.3 L994.4 423.2 L991.2 424.3 L988 425.3 L984.9 426.4 L981.8 427.6 L978.7 428.9 L975.7 430.2 L972.7 431.5 L969.7 432.9 L966.8 434.3 L963.9 435.8 L961 437.4 L958.2 439 L955.5 440.6 L952.7 442.3 L950.1 444 L947.4 445.8 L944.8 447.6 L942.3 449.5 L939.8 451.4 L937.4 453.4 L935 455.4 L932.7 457.4 L930.4 459.5 L928.1 461.7 L926 463.8 L923.9 466 L921.8 468.3 L919.8 470.5 L917.9 472.8 L916 475.2 L914.2 477.5 L912.4 479.9 L910.8 482.4 L909.1 484.8 L907.6 487.3 L906.1 489.8 L904.7 492.4 L903.3 494.9 L902 497.5 L900.8 500.1 L899.6 502.8 L898.5 505.4 L897.5 508.1 L896.6 510.8 L895.7 513.5 L894.9 516.2 L894.2 518.9 L893.5 521.7 L892.9 524.4 L892.4 527.2 L891.9 529.9 L891.6 532.7 L891.3 535.5 L891 538.3 L890.9 541.1 L890.8 543.9 L890.8 546.7 L890.9 549.5 L891 552.3 L891.2 555.1 L891.5 557.8 L891.8 560.6 L892.3 563.4 L892.8 566.2 L893.3 568.9 L894 571.6 L636.9 778.4 Z" fill="#4876ba"/><path d="M636.9 778.4 L759.4 880 L1016.5 673.3 L1019.8 673.8 L1023.2 674.3 L1026.5 674.8 L1029.9 675.2 L1033.3 675.5 L1036.7 675.8 L1040.1 676 L1043.6 676.2 L1047 676.3 L1050.4 676.3 L1053.8 676.3 L1057.2 676.2 L1060.7 676 L1064.1 675.8 L1067.5 675.6 L1070.9 675.3 L1074.3 674.9 L1077.6 674.4 L1081 673.9 L1084.4 673.4 L1087.7 672.8 L1091 672.1 L1094.3 671.4 L1097.6 670.6 L1100.9 669.7 L1104.1 668.8 L1107.3 667.9 L1110.5 666.8 L1113.7 665.8 L1116.8 664.6 L1119.9 663.5 L1123 662.2 L1126 660.9 L1129 659.6 L1132 658.2 L1134.9 656.8 L1137.8 655.3 L1140.7 653.7 L1143.5 652.1 L1146.2 650.5 L1149 648.8 L1151.6 647.1 L1154.3 645.3 L1156.9 643.5 L1159.4 641.6 L1161.9 639.7 L1164.3 637.7 L1166.7 635.7 L1169 633.7 L1171.3 631.6 L1173.6 629.4 L1175.7 627.3 L1177.8 625.1 L1179.9 622.8 L1181.9 620.6 L1183.8 618.3 L1185.7 615.9 L1187.5 613.6 L1189.3 611.2 L1190.9 608.7 L1192.6 606.3 L1194.1 603.8 L1195.6 601.3 L1197 598.7 L1198.4 596.2 L1199.7 593.6 L1200.9 591 L1202.1 588.3 L1203.2 585.7 L1204.2 583 L1205.1 580.3 L1206 577.6 L1206.8 574.9 L1207.5 572.2 L1208.2 569.4 L1208.8 566.7 L1209.3 563.9 L1209.8 561.2 L1210.1 558.4 L1210.4 555.6 L1210.7 552.8 L1210.8 550 L1210.9 547.2 L1210.9 544.4 L1210.9 541.6 L1210.7 538.8 L1210.5 536.1 L1210.2 533.3 L1209.9 530.5 L1209.4 527.7 L1208.9 525 L1208.4 522.2 L1207.7 519.5 L1207 516.7 L1206.2 514 L1205.4 511.3 L1204.4 508.6 L1203.4 505.9 L1202.4 503.3 L1201.2 500.6 L1200 498 L1198.8 495.4 L1197.4 492.9 L1196 490.3 L1194.5 487.8 L1193 485.3 L1191.4 482.8 L1189.7 480.4 L1188 478 L1186.2 475.6 L1184.3 473.3 L1182.4 471 L1180.4 468.7 L1178.4 466.4 L1176.3 464.2 L1174.1 462.1 L1171.9 459.9 L1169.7 457.8 L1167.3 455.8 L1165 453.8 L1162.5 451.8 L1160.1 449.9 L1157.5 448 L1155 446.2 L1152.3 444.4 L1149.7 442.6 L1147 440.9 L1144.2 439.3 L1141.4 437.7 L1138.6 436.1 L1135.7 434.6 L1132.8 433.2 L1129.8 431.8 L1126.8 430.4 L1123.8 429.1 L1120.7 427.9 L1117.6 426.7 L1114.5 425.5 L1111.3 424.5 L1108.2 423.4 L1104.9 422.5 L1101.7 421.5 L1098.5 420.7 L1095.2 419.9 L1091.9 419.1 L1088.6 418.5 L1085.2 417.8 L1081.9 417.3 L1078.5 416.8 L1075.2 416.3 L1071.8 415.9 L1068.4 415.6 L1065 415.3 L1061.6 415.1 L1058.1 414.9 L1054.7 414.8 L1051.3 414.8 L1047.9 414.8 L1044.5 414.9 L1041 415.1 L1037.6 415.3 L1034.2 415.5 L1030.8 415.8 L1027.4 416.2 L1024.1 416.7 L1020.7 417.2 L1017.3 417.7 L1014 418.3 L1010.7 419 L1007.4 419.7 L1004.1 420.5 L1000.8 421.4 L997.6 422.3 L994.4 423.2 L991.2 424.3 L988 425.3 L984.9 426.4 L981.8 427.6 L978.7 428.9 L975.7 430.2 L972.7 431.5 L969.7 432.9 L966.8 434.3 L963.9 435.8 L961 437.4 L958.2 439 L955.5 440.6 L952.7 442.3 L950.1 444 L947.4 445.8 L944.8 447.6 L942.3 449.5 L939.8 451.4 L937.4 453.4 L935 455.4 L932.7 457.4 L930.4 459.5 L928.1 461.7 L926 463.8 L923.9 466 L921.8 468.3 L919.8 470.5 L917.9 472.8 L916 475.2 L914.2 477.5 L912.4 479.9 L910.8 482.4 L909.1 484.8 L907.6 487.3 L906.1 489.8 L904.7 492.4 L903.3 494.9 L902 497.5 L900.8 500.1 L899.6 502.8 L898.5 505.4 L897.5 508.1 L896.6 510.8 L895.7 513.5 L894.9 516.2 L894.2 518.9 L893.5 521.7 L892.9 524.4 L892.4 527.2 L891.9 529.9 L891.6 532.7 L891.3 535.5 L891 538.3 L890.9 541.1 L890.8 543.9 L890.8 546.7 L890.9 549.5 L891 552.3 L891.2 555.1 L891.5 557.8 L891.8 560.6 L892.3 563.4 L892.8 566.2 L893.3 568.9 L894 571.6 L636.9 778.4 Z" fill="none" stroke="#d81a2a" stroke-width="1.5" stroke-linejoin="round"/>
<path d="M1372.5 572.7 L1374.6 570.9 L1376.5 569 L1378.3 567 L1379.9 564.8 L1381.3 562.6 L1382.5 560.3 L1383.5 558 L1384.3 555.6 L1385 553.2 L1385.3 550.7 L1385.5 548.2 L1385.5 545.7 L1385.3 543.2 L1384.8 540.8 L1384.1 538.3 L1383.3 536 L1382.2 533.6 L1380.9 531.4 L1379.5 529.2 L1377.9 527.1 L1376 525.1 L1374.1 523.2 L1371.9 521.4 L1369.6 519.8 L1367.2 518.3 L1364.7 516.9 L1362 515.7 L1359.3 514.6 L1356.4 513.7 L1353.5 512.9 L1350.6 512.4 L1347.6 512 L1344.5 511.7 L1341.5 511.7 L1338.4 511.8 L1335.4 512.1 L1332.4 512.5 L1329.5 513.1 L1326.6 513.9 L1323.8 514.9 L1321 516 L1318.4 517.3 L1315.9 518.7 L1313.5 520.2 L1311.3 521.9 L1309.2 523.7 L1307.2 525.6 L1305.5 527.7 L1303.9 529.8 L1302.5 532 L1301.3 534.3 L1300.2 536.6 L1299.4 539 L1298.8 541.5 L1298.4 543.9 L1298.2 546.4 L1298.3 548.9 L1298.5 551.4 L1299 553.9 L1299.6 556.3 L1300.5 558.7 L1301.6 561 L1302.8 563.3 L1304.3 565.5 L1305.9 567.5 L1307.7 569.5 L1309.7 571.4 L1311.9 573.2 L1314.1 574.9 L1316.6 576.4 L1319.1 577.7 L1321.8 579 L1324.5 580 L1327.3 580.9 L1330.2 581.7 L1333.2 582.3 L1336.2 582.7 L1339.3 582.9 L1342.3 583 L1345.3 582.9 L1348.4 582.6 L1351.4 582.1 L1354.3 581.5 L1357.2 580.7 L1360 579.7 L1362.7 578.6 L1365.4 577.4 L1367.9 576 L1370.3 574.4 L1372.5 572.7 Z" fill="none" stroke="#ead2cc" stroke-width="5.5" stroke-linejoin="round"/><path d="M1372.5 572.7 L1374.6 570.9 L1376.5 569 L1378.3 567 L1379.9 564.8 L1381.3 562.6 L1382.5 560.3 L1383.5 558 L1384.3 555.6 L1385 553.2 L1385.3 550.7 L1385.5 548.2 L1385.5 545.7 L1385.3 543.2 L1384.8 540.8 L1384.1 538.3 L1383.3 536 L1382.2 533.6 L1380.9 531.4 L1379.5 529.2 L1377.9 527.1 L1376 525.1 L1374.1 523.2 L1371.9 521.4 L1369.6 519.8 L1367.2 518.3 L1364.7 516.9 L1362 515.7 L1359.3 514.6 L1356.4 513.7 L1353.5 512.9 L1350.6 512.4 L1347.6 512 L1344.5 511.7 L1341.5 511.7 L1338.4 511.8 L1335.4 512.1 L1332.4 512.5 L1329.5 513.1 L1326.6 513.9 L1323.8 514.9 L1321 516 L1318.4 517.3 L1315.9 518.7 L1313.5 520.2 L1311.3 521.9 L1309.2 523.7 L1307.2 525.6 L1305.5 527.7 L1303.9 529.8 L1302.5 532 L1301.3 534.3 L1300.2 536.6 L1299.4 539 L1298.8 541.5 L1298.4 543.9 L1298.2 546.4 L1298.3 548.9 L1298.5 551.4 L1299 553.9 L1299.6 556.3 L1300.5 558.7 L1301.6 561 L1302.8 563.3 L1304.3 565.5 L1305.9 567.5 L1307.7 569.5 L1309.7 571.4 L1311.9 573.2 L1314.1 574.9 L1316.6 576.4 L1319.1 577.7 L1321.8 579 L1324.5 580 L1327.3 580.9 L1330.2 581.7 L1333.2 582.3 L1336.2 582.7 L1339.3 582.9 L1342.3 583 L1345.3 582.9 L1348.4 582.6 L1351.4 582.1 L1354.3 581.5 L1357.2 580.7 L1360 579.7 L1362.7 578.6 L1365.4 577.4 L1367.9 576 L1370.3 574.4 L1372.5 572.7 Z" fill="#4876ba"/><path d="M1372.5 572.7 L1374.6 570.9 L1376.5 569 L1378.3 567 L1379.9 564.8 L1381.3 562.6 L1382.5 560.3 L1383.5 558 L1384.3 555.6 L1385 553.2 L1385.3 550.7 L1385.5 548.2 L1385.5 545.7 L1385.3 543.2 L1384.8 540.8 L1384.1 538.3 L1383.3 536 L1382.2 533.6 L1380.9 531.4 L1379.5 529.2 L1377.9 527.1 L1376 525.1 L1374.1 523.2 L1371.9 521.4 L1369.6 519.8 L1367.2 518.3 L1364.7 516.9 L1362 515.7 L1359.3 514.6 L1356.4 513.7 L1353.5 512.9 L1350.6 512.4 L1347.6 512 L1344.5 511.7 L1341.5 511.7 L1338.4 511.8 L1335.4 512.1 L1332.4 512.5 L1329.5 513.1 L1326.6 513.9 L1323.8 514.9 L1321 516 L1318.4 517.3 L1315.9 518.7 L1313.5 520.2 L1311.3 521.9 L1309.2 523.7 L1307.2 525.6 L1305.5 527.7 L1303.9 529.8 L1302.5 532 L1301.3 534.3 L1300.2 536.6 L1299.4 539 L1298.8 541.5 L1298.4 543.9 L1298.2 546.4 L1298.3 548.9 L1298.5 551.4 L1299 553.9 L1299.6 556.3 L1300.5 558.7 L1301.6 561 L1302.8 563.3 L1304.3 565.5 L1305.9 567.5 L1307.7 569.5 L1309.7 571.4 L1311.9 573.2 L1314.1 574.9 L1316.6 576.4 L1319.1 577.7 L1321.8 579 L1324.5 580 L1327.3 580.9 L1330.2 581.7 L1333.2 582.3 L1336.2 582.7 L1339.3 582.9 L1342.3 583 L1345.3 582.9 L1348.4 582.6 L1351.4 582.1 L1354.3 581.5 L1357.2 580.7 L1360 579.7 L1362.7 578.6 L1365.4 577.4 L1367.9 576 L1370.3 574.4 L1372.5 572.7 Z" fill="none" stroke="#d81a2a" stroke-width="1.5" stroke-linejoin="round"/>
<path d="M1083.8 333.2 L1085.9 331.4 L1087.9 329.5 L1089.6 327.5 L1091.2 325.3 L1092.6 323.1 L1093.8 320.9 L1094.9 318.5 L1095.7 316.1 L1096.3 313.7 L1096.7 311.2 L1096.9 308.7 L1096.8 306.2 L1096.6 303.7 L1096.1 301.3 L1095.5 298.9 L1094.6 296.5 L1093.5 294.1 L1092.3 291.9 L1090.8 289.7 L1089.2 287.6 L1087.4 285.6 L1085.4 283.7 L1083.3 281.9 L1081 280.3 L1078.6 278.8 L1076 277.4 L1073.4 276.2 L1070.6 275.1 L1067.8 274.2 L1064.9 273.5 L1061.9 272.9 L1058.9 272.5 L1055.9 272.2 L1052.8 272.2 L1049.8 272.3 L1046.7 272.6 L1043.7 273 L1040.8 273.7 L1037.9 274.4 L1035.1 275.4 L1032.4 276.5 L1029.7 277.8 L1027.2 279.2 L1024.8 280.7 L1022.6 282.4 L1020.5 284.2 L1018.6 286.2 L1016.8 288.2 L1015.2 290.3 L1013.8 292.5 L1012.6 294.8 L1011.6 297.2 L1010.8 299.6 L1010.2 302 L1009.8 304.5 L1009.6 306.9 L1009.6 309.4 L1009.8 311.9 L1010.3 314.4 L1011 316.8 L1011.8 319.2 L1012.9 321.5 L1014.2 323.8 L1015.6 326 L1017.3 328.1 L1019.1 330.1 L1021.1 332 L1023.2 333.7 L1025.5 335.4 L1027.9 336.9 L1030.4 338.3 L1033.1 339.5 L1035.8 340.5 L1038.7 341.5 L1041.6 342.2 L1044.5 342.8 L1047.5 343.2 L1050.6 343.4 L1053.6 343.5 L1056.7 343.4 L1059.7 343.1 L1062.7 342.6 L1065.6 342 L1068.5 341.2 L1071.3 340.3 L1074.1 339.1 L1076.7 337.9 L1079.2 336.5 L1081.6 334.9 L1083.8 333.2 Z" fill="none" stroke="#ead2cc" stroke-width="5.5" stroke-linejoin="round"/><path d="M1083.8 333.2 L1085.9 331.4 L1087.9 329.5 L1089.6 327.5 L1091.2 325.3 L1092.6 323.1 L1093.8 320.9 L1094.9 318.5 L1095.7 316.1 L1096.3 313.7 L1096.7 311.2 L1096.9 308.7 L1096.8 306.2 L1096.6 303.7 L1096.1 301.3 L1095.5 298.9 L1094.6 296.5 L1093.5 294.1 L1092.3 291.9 L1090.8 289.7 L1089.2 287.6 L1087.4 285.6 L1085.4 283.7 L1083.3 281.9 L1081 280.3 L1078.6 278.8 L1076 277.4 L1073.4 276.2 L1070.6 275.1 L1067.8 274.2 L1064.9 273.5 L1061.9 272.9 L1058.9 272.5 L1055.9 272.2 L1052.8 272.2 L1049.8 272.3 L1046.7 272.6 L1043.7 273 L1040.8 273.7 L1037.9 274.4 L1035.1 275.4 L1032.4 276.5 L1029.7 277.8 L1027.2 279.2 L1024.8 280.7 L1022.6 282.4 L1020.5 284.2 L1018.6 286.2 L1016.8 288.2 L1015.2 290.3 L1013.8 292.5 L1012.6 294.8 L1011.6 297.2 L1010.8 299.6 L1010.2 302 L1009.8 304.5 L1009.6 306.9 L1009.6 309.4 L1009.8 311.9 L1010.3 314.4 L1011 316.8 L1011.8 319.2 L1012.9 321.5 L1014.2 323.8 L1015.6 326 L1017.3 328.1 L1019.1 330.1 L1021.1 332 L1023.2 333.7 L1025.5 335.4 L1027.9 336.9 L1030.4 338.3 L1033.1 339.5 L1035.8 340.5 L1038.7 341.5 L1041.6 342.2 L1044.5 342.8 L1047.5 343.2 L1050.6 343.4 L1053.6 343.5 L1056.7 343.4 L1059.7 343.1 L1062.7 342.6 L1065.6 342 L1068.5 341.2 L1071.3 340.3 L1074.1 339.1 L1076.7 337.9 L1079.2 336.5 L1081.6 334.9 L1083.8 333.2 Z" fill="#4876ba"/><path d="M1083.8 333.2 L1085.9 331.4 L1087.9 329.5 L1089.6 327.5 L1091.2 325.3 L1092.6 323.1 L1093.8 320.9 L1094.9 318.5 L1095.7 316.1 L1096.3 313.7 L1096.7 311.2 L1096.9 308.7 L1096.8 306.2 L1096.6 303.7 L1096.1 301.3 L1095.5 298.9 L1094.6 296.5 L1093.5 294.1 L1092.3 291.9 L1090.8 289.7 L1089.2 287.6 L1087.4 285.6 L1085.4 283.7 L1083.3 281.9 L1081 280.3 L1078.6 278.8 L1076 277.4 L1073.4 276.2 L1070.6 275.1 L1067.8 274.2 L1064.9 273.5 L1061.9 272.9 L1058.9 272.5 L1055.9 272.2 L1052.8 272.2 L1049.8 272.3 L1046.7 272.6 L1043.7 273 L1040.8 273.7 L1037.9 274.4 L1035.1 275.4 L1032.4 276.5 L1029.7 277.8 L1027.2 279.2 L1024.8 280.7 L1022.6 282.4 L1020.5 284.2 L1018.6 286.2 L1016.8 288.2 L1015.2 290.3 L1013.8 292.5 L1012.6 294.8 L1011.6 297.2 L1010.8 299.6 L1010.2 302 L1009.8 304.5 L1009.6 306.9 L1009.6 309.4 L1009.8 311.9 L1010.3 314.4 L1011 316.8 L1011.8 319.2 L1012.9 321.5 L1014.2 323.8 L1015.6 326 L1017.3 328.1 L1019.1 330.1 L1021.1 332 L1023.2 333.7 L1025.5 335.4 L1027.9 336.9 L1030.4 338.3 L1033.1 339.5 L1035.8 340.5 L1038.7 341.5 L1041.6 342.2 L1044.5 342.8 L1047.5 343.2 L1050.6 343.4 L1053.6 343.5 L1056.7 343.4 L1059.7 343.1 L1062.7 342.6 L1065.6 342 L1068.5 341.2 L1071.3 340.3 L1074.1 339.1 L1076.7 337.9 L1079.2 336.5 L1081.6 334.9 L1083.8 333.2 Z" fill="none" stroke="#d81a2a" stroke-width="1.5" stroke-linejoin="round"/>
<path d="M790.4 569.2 L792.5 567.4 L794.5 565.4 L796.2 563.4 L797.8 561.3 L799.2 559.1 L800.5 556.8 L801.5 554.5 L802.3 552.1 L802.9 549.6 L803.3 547.1 L803.5 544.7 L803.4 542.2 L803.2 539.7 L802.7 537.2 L802.1 534.8 L801.2 532.4 L800.1 530.1 L798.9 527.8 L797.4 525.6 L795.8 523.5 L794 521.5 L792 519.6 L789.9 517.9 L787.6 516.2 L785.2 514.7 L782.6 513.3 L780 512.1 L777.2 511.1 L774.4 510.1 L771.5 509.4 L768.5 508.8 L765.5 508.4 L762.5 508.2 L759.4 508.1 L756.4 508.2 L753.3 508.5 L750.3 509 L747.4 509.6 L744.5 510.4 L741.7 511.3 L739 512.5 L736.3 513.7 L733.8 515.1 L731.5 516.7 L729.2 518.4 L727.1 520.2 L725.2 522.1 L723.4 524.1 L721.8 526.3 L720.4 528.5 L719.2 530.7 L718.2 533.1 L717.4 535.5 L716.8 537.9 L716.4 540.4 L716.2 542.9 L716.2 545.4 L716.5 547.9 L716.9 550.3 L717.6 552.7 L718.4 555.1 L719.5 557.5 L720.8 559.7 L722.2 561.9 L723.9 564 L725.7 566 L727.7 567.9 L729.8 569.7 L732.1 571.3 L734.5 572.8 L737 574.2 L739.7 575.4 L742.4 576.5 L745.3 577.4 L748.2 578.1 L751.1 578.7 L754.2 579.1 L757.2 579.4 L760.2 579.4 L763.3 579.3 L766.3 579 L769.3 578.6 L772.2 577.9 L775.1 577.2 L778 576.2 L780.7 575.1 L783.3 573.8 L785.8 572.4 L788.2 570.9 L790.4 569.2 Z" fill="none" stroke="#ead2cc" stroke-width="5.5" stroke-linejoin="round"/><path d="M790.4 569.2 L792.5 567.4 L794.5 565.4 L796.2 563.4 L797.8 561.3 L799.2 559.1 L800.5 556.8 L801.5 554.5 L802.3 552.1 L802.9 549.6 L803.3 547.1 L803.5 544.7 L803.4 542.2 L803.2 539.7 L802.7 537.2 L802.1 534.8 L801.2 532.4 L800.1 530.1 L798.9 527.8 L797.4 525.6 L795.8 523.5 L794 521.5 L792 519.6 L789.9 517.9 L787.6 516.2 L785.2 514.7 L782.6 513.3 L780 512.1 L777.2 511.1 L774.4 510.1 L771.5 509.4 L768.5 508.8 L765.5 508.4 L762.5 508.2 L759.4 508.1 L756.4 508.2 L753.3 508.5 L750.3 509 L747.4 509.6 L744.5 510.4 L741.7 511.3 L739 512.5 L736.3 513.7 L733.8 515.1 L731.5 516.7 L729.2 518.4 L727.1 520.2 L725.2 522.1 L723.4 524.1 L721.8 526.3 L720.4 528.5 L719.2 530.7 L718.2 533.1 L717.4 535.5 L716.8 537.9 L716.4 540.4 L716.2 542.9 L716.2 545.4 L716.5 547.9 L716.9 550.3 L717.6 552.7 L718.4 555.1 L719.5 557.5 L720.8 559.7 L722.2 561.9 L723.9 564 L725.7 566 L727.7 567.9 L729.8 569.7 L732.1 571.3 L734.5 572.8 L737 574.2 L739.7 575.4 L742.4 576.5 L745.3 577.4 L748.2 578.1 L751.1 578.7 L754.2 579.1 L757.2 579.4 L760.2 579.4 L763.3 579.3 L766.3 579 L769.3 578.6 L772.2 577.9 L775.1 577.2 L778 576.2 L780.7 575.1 L783.3 573.8 L785.8 572.4 L788.2 570.9 L790.4 569.2 Z" fill="#4876ba"/><path d="M790.4 569.2 L792.5 567.4 L794.5 565.4 L796.2 563.4 L797.8 561.3 L799.2 559.1 L800.5 556.8 L801.5 554.5 L802.3 552.1 L802.9 549.6 L803.3 547.1 L803.5 544.7 L803.4 542.2 L803.2 539.7 L802.7 537.2 L802.1 534.8 L801.2 532.4 L800.1 530.1 L798.9 527.8 L797.4 525.6 L795.8 523.5 L794 521.5 L792 519.6 L789.9 517.9 L787.6 516.2 L785.2 514.7 L782.6 513.3 L780 512.1 L777.2 511.1 L774.4 510.1 L771.5 509.4 L768.5 508.8 L765.5 508.4 L762.5 508.2 L759.4 508.1 L756.4 508.2 L753.3 508.5 L750.3 509 L747.4 509.6 L744.5 510.4 L741.7 511.3 L739 512.5 L736.3 513.7 L733.8 515.1 L731.5 516.7 L729.2 518.4 L727.1 520.2 L725.2 522.1 L723.4 524.1 L721.8 526.3 L720.4 528.5 L719.2 530.7 L718.2 533.1 L717.4 535.5 L716.8 537.9 L716.4 540.4 L716.2 542.9 L716.2 545.4 L716.5 547.9 L716.9 550.3 L717.6 552.7 L718.4 555.1 L719.5 557.5 L720.8 559.7 L722.2 561.9 L723.9 564 L725.7 566 L727.7 567.9 L729.8 569.7 L732.1 571.3 L734.5 572.8 L737 574.2 L739.7 575.4 L742.4 576.5 L745.3 577.4 L748.2 578.1 L751.1 578.7 L754.2 579.1 L757.2 579.4 L760.2 579.4 L763.3 579.3 L766.3 579 L769.3 578.6 L772.2 577.9 L775.1 577.2 L778 576.2 L780.7 575.1 L783.3 573.8 L785.8 572.4 L788.2 570.9 L790.4 569.2 Z" fill="none" stroke="#d81a2a" stroke-width="1.5" stroke-linejoin="round"/>
<path d="M1079.1 808.7 L1081.2 806.9 L1083.1 804.9 L1084.9 802.9 L1086.5 800.8 L1087.9 798.6 L1089.1 796.3 L1090.1 793.9 L1090.9 791.5 L1091.6 789.1 L1091.9 786.6 L1092.1 784.1 L1092.1 781.7 L1091.9 779.2 L1091.4 776.7 L1090.8 774.3 L1089.9 771.9 L1088.8 769.6 L1087.5 767.3 L1086.1 765.1 L1084.5 763 L1082.6 761 L1080.7 759.1 L1078.5 757.4 L1076.2 755.7 L1073.8 754.2 L1071.3 752.8 L1068.6 751.6 L1065.9 750.5 L1063 749.6 L1060.1 748.9 L1057.2 748.3 L1054.2 747.9 L1051.1 747.7 L1048.1 747.6 L1045 747.7 L1042 748 L1039 748.5 L1036.1 749.1 L1033.2 749.9 L1030.4 750.8 L1027.6 751.9 L1025 753.2 L1022.5 754.6 L1020.1 756.2 L1017.9 757.9 L1015.8 759.7 L1013.8 761.6 L1012.1 763.6 L1010.5 765.7 L1009.1 767.9 L1007.9 770.2 L1006.8 772.6 L1006 775 L1005.4 777.4 L1005 779.9 L1004.8 782.4 L1004.9 784.9 L1005.1 787.3 L1005.6 789.8 L1006.2 792.2 L1007.1 794.6 L1008.2 796.9 L1009.4 799.2 L1010.9 801.4 L1012.5 803.5 L1014.3 805.5 L1016.3 807.4 L1018.5 809.2 L1020.7 810.8 L1023.2 812.3 L1025.7 813.7 L1028.4 814.9 L1031.1 816 L1033.9 816.9 L1036.9 817.6 L1039.8 818.2 L1042.8 818.6 L1045.9 818.9 L1048.9 818.9 L1051.9 818.8 L1055 818.5 L1058 818.1 L1060.9 817.4 L1063.8 816.6 L1066.6 815.7 L1069.3 814.6 L1072 813.3 L1074.5 811.9 L1076.9 810.3 L1079.1 808.7 Z" fill="none" stroke="#ead2cc" stroke-width="5.5" stroke-linejoin="round"/><path d="M1079.1 808.7 L1081.2 806.9 L1083.1 804.9 L1084.9 802.9 L1086.5 800.8 L1087.9 798.6 L1089.1 796.3 L1090.1 793.9 L1090.9 791.5 L1091.6 789.1 L1091.9 786.6 L1092.1 784.1 L1092.1 781.7 L1091.9 779.2 L1091.4 776.7 L1090.8 774.3 L1089.9 771.9 L1088.8 769.6 L1087.5 767.3 L1086.1 765.1 L1084.5 763 L1082.6 761 L1080.7 759.1 L1078.5 757.4 L1076.2 755.7 L1073.8 754.2 L1071.3 752.8 L1068.6 751.6 L1065.9 750.5 L1063 749.6 L1060.1 748.9 L1057.2 748.3 L1054.2 747.9 L1051.1 747.7 L1048.1 747.6 L1045 747.7 L1042 748 L1039 748.5 L1036.1 749.1 L1033.2 749.9 L1030.4 750.8 L1027.6 751.9 L1025 753.2 L1022.5 754.6 L1020.1 756.2 L1017.9 757.9 L1015.8 759.7 L1013.8 761.6 L1012.1 763.6 L1010.5 765.7 L1009.1 767.9 L1007.9 770.2 L1006.8 772.6 L1006 775 L1005.4 777.4 L1005 779.9 L1004.8 782.4 L1004.9 784.9 L1005.1 787.3 L1005.6 789.8 L1006.2 792.2 L1007.1 794.6 L1008.2 796.9 L1009.4 799.2 L1010.9 801.4 L1012.5 803.5 L1014.3 805.5 L1016.3 807.4 L1018.5 809.2 L1020.7 810.8 L1023.2 812.3 L1025.7 813.7 L1028.4 814.9 L1031.1 816 L1033.9 816.9 L1036.9 817.6 L1039.8 818.2 L1042.8 818.6 L1045.9 818.9 L1048.9 818.9 L1051.9 818.8 L1055 818.5 L1058 818.1 L1060.9 817.4 L1063.8 816.6 L1066.6 815.7 L1069.3 814.6 L1072 813.3 L1074.5 811.9 L1076.9 810.3 L1079.1 808.7 Z" fill="#4876ba"/><path d="M1079.1 808.7 L1081.2 806.9 L1083.1 804.9 L1084.9 802.9 L1086.5 800.8 L1087.9 798.6 L1089.1 796.3 L1090.1 793.9 L1090.9 791.5 L1091.6 789.1 L1091.9 786.6 L1092.1 784.1 L1092.1 781.7 L1091.9 779.2 L1091.4 776.7 L1090.8 774.3 L1089.9 771.9 L1088.8 769.6 L1087.5 767.3 L1086.1 765.1 L1084.5 763 L1082.6 761 L1080.7 759.1 L1078.5 757.4 L1076.2 755.7 L1073.8 754.2 L1071.3 752.8 L1068.6 751.6 L1065.9 750.5 L1063 749.6 L1060.1 748.9 L1057.2 748.3 L1054.2 747.9 L1051.1 747.7 L1048.1 747.6 L1045 747.7 L1042 748 L1039 748.5 L1036.1 749.1 L1033.2 749.9 L1030.4 750.8 L1027.6 751.9 L1025 753.2 L1022.5 754.6 L1020.1 756.2 L1017.9 757.9 L1015.8 759.7 L1013.8 761.6 L1012.1 763.6 L1010.5 765.7 L1009.1 767.9 L1007.9 770.2 L1006.8 772.6 L1006 775 L1005.4 777.4 L1005 779.9 L1004.8 782.4 L1004.9 784.9 L1005.1 787.3 L1005.6 789.8 L1006.2 792.2 L1007.1 794.6 L1008.2 796.9 L1009.4 799.2 L1010.9 801.4 L1012.5 803.5 L1014.3 805.5 L1016.3 807.4 L1018.5 809.2 L1020.7 810.8 L1023.2 812.3 L1025.7 813.7 L1028.4 814.9 L1031.1 816 L1033.9 816.9 L1036.9 817.6 L1039.8 818.2 L1042.8 818.6 L1045.9 818.9 L1048.9 818.9 L1051.9 818.8 L1055 818.5 L1058 818.1 L1060.9 817.4 L1063.8 816.6 L1066.6 815.7 L1069.3 814.6 L1072 813.3 L1074.5 811.9 L1076.9 810.3 L1079.1 808.7 Z" fill="none" stroke="#d81a2a" stroke-width="1.5" stroke-linejoin="round"/>
<path d="M565.3 735.9 L567.4 734.1 L569.4 732.2 L571.1 730.1 L572.7 728 L574.1 725.8 L575.3 723.5 L576.4 721.2 L577.2 718.8 L577.8 716.3 L578.2 713.9 L578.3 711.4 L578.3 708.9 L578.1 706.4 L577.6 704 L577 701.5 L576.1 699.1 L575 696.8 L573.8 694.5 L572.3 692.4 L570.7 690.3 L568.9 688.3 L566.9 686.4 L564.7 684.6 L562.5 683 L560 681.4 L557.5 680.1 L554.8 678.9 L552.1 677.8 L549.3 676.9 L546.3 676.1 L543.4 675.5 L540.4 675.1 L537.3 674.9 L534.3 674.8 L531.3 675 L528.2 675.2 L525.2 675.7 L522.3 676.3 L519.4 677.1 L516.6 678.1 L513.9 679.2 L511.2 680.5 L508.7 681.9 L506.3 683.4 L504.1 685.1 L502 686.9 L500.1 688.8 L498.3 690.9 L496.7 693 L495.3 695.2 L494.1 697.5 L493.1 699.8 L492.3 702.2 L491.6 704.7 L491.2 707.1 L491.1 709.6 L491.1 712.1 L491.3 714.6 L491.8 717 L492.4 719.5 L493.3 721.9 L494.4 724.2 L495.6 726.5 L497.1 728.6 L498.7 730.7 L500.6 732.7 L502.5 734.6 L504.7 736.4 L507 738 L509.4 739.6 L511.9 740.9 L514.6 742.2 L517.3 743.2 L520.2 744.1 L523.1 744.9 L526 745.5 L529 745.9 L532.1 746.1 L535.1 746.2 L538.2 746 L541.2 745.8 L544.2 745.3 L547.1 744.7 L550 743.9 L552.8 742.9 L555.6 741.8 L558.2 740.5 L560.7 739.1 L563.1 737.6 L565.3 735.9 Z" fill="none" stroke="#ead2cc" stroke-width="5.5" stroke-linejoin="round"/><path d="M565.3 735.9 L567.4 734.1 L569.4 732.2 L571.1 730.1 L572.7 728 L574.1 725.8 L575.3 723.5 L576.4 721.2 L577.2 718.8 L577.8 716.3 L578.2 713.9 L578.3 711.4 L578.3 708.9 L578.1 706.4 L577.6 704 L577 701.5 L576.1 699.1 L575 696.8 L573.8 694.5 L572.3 692.4 L570.7 690.3 L568.9 688.3 L566.9 686.4 L564.7 684.6 L562.5 683 L560 681.4 L557.5 680.1 L554.8 678.9 L552.1 677.8 L549.3 676.9 L546.3 676.1 L543.4 675.5 L540.4 675.1 L537.3 674.9 L534.3 674.8 L531.3 675 L528.2 675.2 L525.2 675.7 L522.3 676.3 L519.4 677.1 L516.6 678.1 L513.9 679.2 L511.2 680.5 L508.7 681.9 L506.3 683.4 L504.1 685.1 L502 686.9 L500.1 688.8 L498.3 690.9 L496.7 693 L495.3 695.2 L494.1 697.5 L493.1 699.8 L492.3 702.2 L491.6 704.7 L491.2 707.1 L491.1 709.6 L491.1 712.1 L491.3 714.6 L491.8 717 L492.4 719.5 L493.3 721.9 L494.4 724.2 L495.6 726.5 L497.1 728.6 L498.7 730.7 L500.6 732.7 L502.5 734.6 L504.7 736.4 L507 738 L509.4 739.6 L511.9 740.9 L514.6 742.2 L517.3 743.2 L520.2 744.1 L523.1 744.9 L526 745.5 L529 745.9 L532.1 746.1 L535.1 746.2 L538.2 746 L541.2 745.8 L544.2 745.3 L547.1 744.7 L550 743.9 L552.8 742.9 L555.6 741.8 L558.2 740.5 L560.7 739.1 L563.1 737.6 L565.3 735.9 Z" fill="#4876ba"/><path d="M565.3 735.9 L567.4 734.1 L569.4 732.2 L571.1 730.1 L572.7 728 L574.1 725.8 L575.3 723.5 L576.4 721.2 L577.2 718.8 L577.8 716.3 L578.2 713.9 L578.3 711.4 L578.3 708.9 L578.1 706.4 L577.6 704 L577 701.5 L576.1 699.1 L575 696.8 L573.8 694.5 L572.3 692.4 L570.7 690.3 L568.9 688.3 L566.9 686.4 L564.7 684.6 L562.5 683 L560 681.4 L557.5 680.1 L554.8 678.9 L552.1 677.8 L549.3 676.9 L546.3 676.1 L543.4 675.5 L540.4 675.1 L537.3 674.9 L534.3 674.8 L531.3 675 L528.2 675.2 L525.2 675.7 L522.3 676.3 L519.4 677.1 L516.6 678.1 L513.9 679.2 L511.2 680.5 L508.7 681.9 L506.3 683.4 L504.1 685.1 L502 686.9 L500.1 688.8 L498.3 690.9 L496.7 693 L495.3 695.2 L494.1 697.5 L493.1 699.8 L492.3 702.2 L491.6 704.7 L491.2 707.1 L491.1 709.6 L491.1 712.1 L491.3 714.6 L491.8 717 L492.4 719.5 L493.3 721.9 L494.4 724.2 L495.6 726.5 L497.1 728.6 L498.7 730.7 L500.6 732.7 L502.5 734.6 L504.7 736.4 L507 738 L509.4 739.6 L511.9 740.9 L514.6 742.2 L517.3 743.2 L520.2 744.1 L523.1 744.9 L526 745.5 L529 745.9 L532.1 746.1 L535.1 746.2 L538.2 746 L541.2 745.8 L544.2 745.3 L547.1 744.7 L550 743.9 L552.8 742.9 L555.6 741.8 L558.2 740.5 L560.7 739.1 L563.1 737.6 L565.3 735.9 Z" fill="none" stroke="#d81a2a" stroke-width="1.5" stroke-linejoin="round"/>
<path d="M871.5 989.9 L873.6 988.1 L875.5 986.2 L877.3 984.2 L878.9 982 L880.3 979.8 L881.5 977.5 L882.5 975.2 L883.3 972.8 L883.9 970.4 L884.3 967.9 L884.5 965.4 L884.5 962.9 L884.3 960.4 L883.8 958 L883.1 955.5 L882.3 953.2 L881.2 950.8 L879.9 948.6 L878.5 946.4 L876.8 944.3 L875 942.3 L873.1 940.4 L870.9 938.6 L868.6 937 L866.2 935.5 L863.7 934.1 L861 932.9 L858.3 931.8 L855.4 930.9 L852.5 930.1 L849.6 929.6 L846.6 929.2 L843.5 928.9 L840.5 928.9 L837.4 929 L834.4 929.3 L831.4 929.7 L828.5 930.3 L825.6 931.1 L822.8 932.1 L820 933.2 L817.4 934.5 L814.9 935.9 L812.5 937.4 L810.3 939.1 L808.2 940.9 L806.2 942.8 L804.5 944.9 L802.9 947 L801.5 949.2 L800.3 951.5 L799.2 953.8 L798.4 956.2 L797.8 958.7 L797.4 961.1 L797.2 963.6 L797.3 966.1 L797.5 968.6 L798 971.1 L798.6 973.5 L799.5 975.9 L800.6 978.2 L801.8 980.5 L803.3 982.6 L804.9 984.7 L806.7 986.7 L808.7 988.6 L810.9 990.4 L813.1 992.1 L815.6 993.6 L818.1 994.9 L820.8 996.2 L823.5 997.2 L826.3 998.1 L829.2 998.9 L832.2 999.5 L835.2 999.9 L838.2 1000.1 L841.3 1000.2 L844.3 1000.1 L847.4 999.8 L850.4 999.3 L853.3 998.7 L856.2 997.9 L859 996.9 L861.7 995.8 L864.4 994.6 L866.9 993.1 L869.3 991.6 L871.5 989.9 Z" fill="none" stroke="#ead2cc" stroke-width="5.5" stroke-linejoin="round"/><path d="M871.5 989.9 L873.6 988.1 L875.5 986.2 L877.3 984.2 L878.9 982 L880.3 979.8 L881.5 977.5 L882.5 975.2 L883.3 972.8 L883.9 970.4 L884.3 967.9 L884.5 965.4 L884.5 962.9 L884.3 960.4 L883.8 958 L883.1 955.5 L882.3 953.2 L881.2 950.8 L879.9 948.6 L878.5 946.4 L876.8 944.3 L875 942.3 L873.1 940.4 L870.9 938.6 L868.6 937 L866.2 935.5 L863.7 934.1 L861 932.9 L858.3 931.8 L855.4 930.9 L852.5 930.1 L849.6 929.6 L846.6 929.2 L843.5 928.9 L840.5 928.9 L837.4 929 L834.4 929.3 L831.4 929.7 L828.5 930.3 L825.6 931.1 L822.8 932.1 L820 933.2 L817.4 934.5 L814.9 935.9 L812.5 937.4 L810.3 939.1 L808.2 940.9 L806.2 942.8 L804.5 944.9 L802.9 947 L801.5 949.2 L800.3 951.5 L799.2 953.8 L798.4 956.2 L797.8 958.7 L797.4 961.1 L797.2 963.6 L797.3 966.1 L797.5 968.6 L798 971.1 L798.6 973.5 L799.5 975.9 L800.6 978.2 L801.8 980.5 L803.3 982.6 L804.9 984.7 L806.7 986.7 L808.7 988.6 L810.9 990.4 L813.1 992.1 L815.6 993.6 L818.1 994.9 L820.8 996.2 L823.5 997.2 L826.3 998.1 L829.2 998.9 L832.2 999.5 L835.2 999.9 L838.2 1000.1 L841.3 1000.2 L844.3 1000.1 L847.4 999.8 L850.4 999.3 L853.3 998.7 L856.2 997.9 L859 996.9 L861.7 995.8 L864.4 994.6 L866.9 993.1 L869.3 991.6 L871.5 989.9 Z" fill="#4876ba"/><path d="M871.5 989.9 L873.6 988.1 L875.5 986.2 L877.3 984.2 L878.9 982 L880.3 979.8 L881.5 977.5 L882.5 975.2 L883.3 972.8 L883.9 970.4 L884.3 967.9 L884.5 965.4 L884.5 962.9 L884.3 960.4 L883.8 958 L883.1 955.5 L882.3 953.2 L881.2 950.8 L879.9 948.6 L878.5 946.4 L876.8 944.3 L875 942.3 L873.1 940.4 L870.9 938.6 L868.6 937 L866.2 935.5 L863.7 934.1 L861 932.9 L858.3 931.8 L855.4 930.9 L852.5 930.1 L849.6 929.6 L846.6 929.2 L843.5 928.9 L840.5 928.9 L837.4 929 L834.4 929.3 L831.4 929.7 L828.5 930.3 L825.6 931.1 L822.8 932.1 L820 933.2 L817.4 934.5 L814.9 935.9 L812.5 937.4 L810.3 939.1 L808.2 940.9 L806.2 942.8 L804.5 944.9 L802.9 947 L801.5 949.2 L800.3 951.5 L799.2 953.8 L798.4 956.2 L797.8 958.7 L797.4 961.1 L797.2 963.6 L797.3 966.1 L797.5 968.6 L798 971.1 L798.6 973.5 L799.5 975.9 L800.6 978.2 L801.8 980.5 L803.3 982.6 L804.9 984.7 L806.7 986.7 L808.7 988.6 L810.9 990.4 L813.1 992.1 L815.6 993.6 L818.1 994.9 L820.8 996.2 L823.5 997.2 L826.3 998.1 L829.2 998.9 L832.2 999.5 L835.2 999.9 L838.2 1000.1 L841.3 1000.2 L844.3 1000.1 L847.4 999.8 L850.4 999.3 L853.3 998.7 L856.2 997.9 L859 996.9 L861.7 995.8 L864.4 994.6 L866.9 993.1 L869.3 991.6 L871.5 989.9 Z" fill="none" stroke="#d81a2a" stroke-width="1.5" stroke-linejoin="round"/>
<clipPath id="profclip"><path d="M636.9 778.4 L759.4 880 L1016.5 673.3 L1019.8 673.8 L1023.2 674.3 L1026.5 674.8 L1029.9 675.2 L1033.3 675.5 L1036.7 675.8 L1040.1 676 L1043.6 676.2 L1047 676.3 L1050.4 676.3 L1053.8 676.3 L1057.2 676.2 L1060.7 676 L1064.1 675.8 L1067.5 675.6 L1070.9 675.3 L1074.3 674.9 L1077.6 674.4 L1081 673.9 L1084.4 673.4 L1087.7 672.8 L1091 672.1 L1094.3 671.4 L1097.6 670.6 L1100.9 669.7 L1104.1 668.8 L1107.3 667.9 L1110.5 666.8 L1113.7 665.8 L1116.8 664.6 L1119.9 663.5 L1123 662.2 L1126 660.9 L1129 659.6 L1132 658.2 L1134.9 656.8 L1137.8 655.3 L1140.7 653.7 L1143.5 652.1 L1146.2 650.5 L1149 648.8 L1151.6 647.1 L1154.3 645.3 L1156.9 643.5 L1159.4 641.6 L1161.9 639.7 L1164.3 637.7 L1166.7 635.7 L1169 633.7 L1171.3 631.6 L1173.6 629.4 L1175.7 627.3 L1177.8 625.1 L1179.9 622.8 L1181.9 620.6 L1183.8 618.3 L1185.7 615.9 L1187.5 613.6 L1189.3 611.2 L1190.9 608.7 L1192.6 606.3 L1194.1 603.8 L1195.6 601.3 L1197 598.7 L1198.4 596.2 L1199.7 593.6 L1200.9 591 L1202.1 588.3 L1203.2 585.7 L1204.2 583 L1205.1 580.3 L1206 577.6 L1206.8 574.9 L1207.5 572.2 L1208.2 569.4 L1208.8 566.7 L1209.3 563.9 L1209.8 561.2 L1210.1 558.4 L1210.4 555.6 L1210.7 552.8 L1210.8 550 L1210.9 547.2 L1210.9 544.4 L1210.9 541.6 L1210.7 538.8 L1210.5 536.1 L1210.2 533.3 L1209.9 530.5 L1209.4 527.7 L1208.9 525 L1208.4 522.2 L1207.7 519.5 L1207 516.7 L1206.2 514 L1205.4 511.3 L1204.4 508.6 L1203.4 505.9 L1202.4 503.3 L1201.2 500.6 L1200 498 L1198.8 495.4 L1197.4 492.9 L1196 490.3 L1194.5 487.8 L1193 485.3 L1191.4 482.8 L1189.7 480.4 L1188 478 L1186.2 475.6 L1184.3 473.3 L1182.4 471 L1180.4 468.7 L1178.4 466.4 L1176.3 464.2 L1174.1 462.1 L1171.9 459.9 L1169.7 457.8 L1167.3 455.8 L1165 453.8 L1162.5 451.8 L1160.1 449.9 L1157.5 448 L1155 446.2 L1152.3 444.4 L1149.7 442.6 L1147 440.9 L1144.2 439.3 L1141.4 437.7 L1138.6 436.1 L1135.7 434.6 L1132.8 433.2 L1129.8 431.8 L1126.8 430.4 L1123.8 429.1 L1120.7 427.9 L1117.6 426.7 L1114.5 425.5 L1111.3 424.5 L1108.2 423.4 L1104.9 422.5 L1101.7 421.5 L1098.5 420.7 L1095.2 419.9 L1091.9 419.1 L1088.6 418.5 L1085.2 417.8 L1081.9 417.3 L1078.5 416.8 L1075.2 416.3 L1071.8 415.9 L1068.4 415.6 L1065 415.3 L1061.6 415.1 L1058.1 414.9 L1054.7 414.8 L1051.3 414.8 L1047.9 414.8 L1044.5 414.9 L1041 415.1 L1037.6 415.3 L1034.2 415.5 L1030.8 415.8 L1027.4 416.2 L1024.1 416.7 L1020.7 417.2 L1017.3 417.7 L1014 418.3 L1010.7 419 L1007.4 419.7 L1004.1 420.5 L1000.8 421.4 L997.6 422.3 L994.4 423.2 L991.2 424.3 L988 425.3 L984.9 426.4 L981.8 427.6 L978.7 428.9 L975.7 430.2 L972.7 431.5 L969.7 432.9 L966.8 434.3 L963.9 435.8 L961 437.4 L958.2 439 L955.5 440.6 L952.7 442.3 L950.1 444 L947.4 445.8 L944.8 447.6 L942.3 449.5 L939.8 451.4 L937.4 453.4 L935 455.4 L932.7 457.4 L930.4 459.5 L928.1 461.7 L926 463.8 L923.9 466 L921.8 468.3 L919.8 470.5 L917.9 472.8 L916 475.2 L914.2 477.5 L912.4 479.9 L910.8 482.4 L909.1 484.8 L907.6 487.3 L906.1 489.8 L904.7 492.4 L903.3 494.9 L902 497.5 L900.8 500.1 L899.6 502.8 L898.5 505.4 L897.5 508.1 L896.6 510.8 L895.7 513.5 L894.9 516.2 L894.2 518.9 L893.5 521.7 L892.9 524.4 L892.4 527.2 L891.9 529.9 L891.6 532.7 L891.3 535.5 L891 538.3 L890.9 541.1 L890.8 543.9 L890.8 546.7 L890.9 549.5 L891 552.3 L891.2 555.1 L891.5 557.8 L891.8 560.6 L892.3 563.4 L892.8 566.2 L893.3 568.9 L894 571.6 L636.9 778.4 Z"/><path d="M1372.5 572.7 L1374.6 570.9 L1376.5 569 L1378.3 567 L1379.9 564.8 L1381.3 562.6 L1382.5 560.3 L1383.5 558 L1384.3 555.6 L1385 553.2 L1385.3 550.7 L1385.5 548.2 L1385.5 545.7 L1385.3 543.2 L1384.8 540.8 L1384.1 538.3 L1383.3 536 L1382.2 533.6 L1380.9 531.4 L1379.5 529.2 L1377.9 527.1 L1376 525.1 L1374.1 523.2 L1371.9 521.4 L1369.6 519.8 L1367.2 518.3 L1364.7 516.9 L1362 515.7 L1359.3 514.6 L1356.4 513.7 L1353.5 512.9 L1350.6 512.4 L1347.6 512 L1344.5 511.7 L1341.5 511.7 L1338.4 511.8 L1335.4 512.1 L1332.4 512.5 L1329.5 513.1 L1326.6 513.9 L1323.8 514.9 L1321 516 L1318.4 517.3 L1315.9 518.7 L1313.5 520.2 L1311.3 521.9 L1309.2 523.7 L1307.2 525.6 L1305.5 527.7 L1303.9 529.8 L1302.5 532 L1301.3 534.3 L1300.2 536.6 L1299.4 539 L1298.8 541.5 L1298.4 543.9 L1298.2 546.4 L1298.3 548.9 L1298.5 551.4 L1299 553.9 L1299.6 556.3 L1300.5 558.7 L1301.6 561 L1302.8 563.3 L1304.3 565.5 L1305.9 567.5 L1307.7 569.5 L1309.7 571.4 L1311.9 573.2 L1314.1 574.9 L1316.6 576.4 L1319.1 577.7 L1321.8 579 L1324.5 580 L1327.3 580.9 L1330.2 581.7 L1333.2 582.3 L1336.2 582.7 L1339.3 582.9 L1342.3 583 L1345.3 582.9 L1348.4 582.6 L1351.4 582.1 L1354.3 581.5 L1357.2 580.7 L1360 579.7 L1362.7 578.6 L1365.4 577.4 L1367.9 576 L1370.3 574.4 L1372.5 572.7 Z"/><path d="M1083.8 333.2 L1085.9 331.4 L1087.9 329.5 L1089.6 327.5 L1091.2 325.3 L1092.6 323.1 L1093.8 320.9 L1094.9 318.5 L1095.7 316.1 L1096.3 313.7 L1096.7 311.2 L1096.9 308.7 L1096.8 306.2 L1096.6 303.7 L1096.1 301.3 L1095.5 298.9 L1094.6 296.5 L1093.5 294.1 L1092.3 291.9 L1090.8 289.7 L1089.2 287.6 L1087.4 285.6 L1085.4 283.7 L1083.3 281.9 L1081 280.3 L1078.6 278.8 L1076 277.4 L1073.4 276.2 L1070.6 275.1 L1067.8 274.2 L1064.9 273.5 L1061.9 272.9 L1058.9 272.5 L1055.9 272.2 L1052.8 272.2 L1049.8 272.3 L1046.7 272.6 L1043.7 273 L1040.8 273.7 L1037.9 274.4 L1035.1 275.4 L1032.4 276.5 L1029.7 277.8 L1027.2 279.2 L1024.8 280.7 L1022.6 282.4 L1020.5 284.2 L1018.6 286.2 L1016.8 288.2 L1015.2 290.3 L1013.8 292.5 L1012.6 294.8 L1011.6 297.2 L1010.8 299.6 L1010.2 302 L1009.8 304.5 L1009.6 306.9 L1009.6 309.4 L1009.8 311.9 L1010.3 314.4 L1011 316.8 L1011.8 319.2 L1012.9 321.5 L1014.2 323.8 L1015.6 326 L1017.3 328.1 L1019.1 330.1 L1021.1 332 L1023.2 333.7 L1025.5 335.4 L1027.9 336.9 L1030.4 338.3 L1033.1 339.5 L1035.8 340.5 L1038.7 341.5 L1041.6 342.2 L1044.5 342.8 L1047.5 343.2 L1050.6 343.4 L1053.6 343.5 L1056.7 343.4 L1059.7 343.1 L1062.7 342.6 L1065.6 342 L1068.5 341.2 L1071.3 340.3 L1074.1 339.1 L1076.7 337.9 L1079.2 336.5 L1081.6 334.9 L1083.8 333.2 Z"/><path d="M790.4 569.2 L792.5 567.4 L794.5 565.4 L796.2 563.4 L797.8 561.3 L799.2 559.1 L800.5 556.8 L801.5 554.5 L802.3 552.1 L802.9 549.6 L803.3 547.1 L803.5 544.7 L803.4 542.2 L803.2 539.7 L802.7 537.2 L802.1 534.8 L801.2 532.4 L800.1 530.1 L798.9 527.8 L797.4 525.6 L795.8 523.5 L794 521.5 L792 519.6 L789.9 517.9 L787.6 516.2 L785.2 514.7 L782.6 513.3 L780 512.1 L777.2 511.1 L774.4 510.1 L771.5 509.4 L768.5 508.8 L765.5 508.4 L762.5 508.2 L759.4 508.1 L756.4 508.2 L753.3 508.5 L750.3 509 L747.4 509.6 L744.5 510.4 L741.7 511.3 L739 512.5 L736.3 513.7 L733.8 515.1 L731.5 516.7 L729.2 518.4 L727.1 520.2 L725.2 522.1 L723.4 524.1 L721.8 526.3 L720.4 528.5 L719.2 530.7 L718.2 533.1 L717.4 535.5 L716.8 537.9 L716.4 540.4 L716.2 542.9 L716.2 545.4 L716.5 547.9 L716.9 550.3 L717.6 552.7 L718.4 555.1 L719.5 557.5 L720.8 559.7 L722.2 561.9 L723.9 564 L725.7 566 L727.7 567.9 L729.8 569.7 L732.1 571.3 L734.5 572.8 L737 574.2 L739.7 575.4 L742.4 576.5 L745.3 577.4 L748.2 578.1 L751.1 578.7 L754.2 579.1 L757.2 579.4 L760.2 579.4 L763.3 579.3 L766.3 579 L769.3 578.6 L772.2 577.9 L775.1 577.2 L778 576.2 L780.7 575.1 L783.3 573.8 L785.8 572.4 L788.2 570.9 L790.4 569.2 Z"/><path d="M1079.1 808.7 L1081.2 806.9 L1083.1 804.9 L1084.9 802.9 L1086.5 800.8 L1087.9 798.6 L1089.1 796.3 L1090.1 793.9 L1090.9 791.5 L1091.6 789.1 L1091.9 786.6 L1092.1 784.1 L1092.1 781.7 L1091.9 779.2 L1091.4 776.7 L1090.8 774.3 L1089.9 771.9 L1088.8 769.6 L1087.5 767.3 L1086.1 765.1 L1084.5 763 L1082.6 761 L1080.7 759.1 L1078.5 757.4 L1076.2 755.7 L1073.8 754.2 L1071.3 752.8 L1068.6 751.6 L1065.9 750.5 L1063 749.6 L1060.1 748.9 L1057.2 748.3 L1054.2 747.9 L1051.1 747.7 L1048.1 747.6 L1045 747.7 L1042 748 L1039 748.5 L1036.1 749.1 L1033.2 749.9 L1030.4 750.8 L1027.6 751.9 L1025 753.2 L1022.5 754.6 L1020.1 756.2 L1017.9 757.9 L1015.8 759.7 L1013.8 761.6 L1012.1 763.6 L1010.5 765.7 L1009.1 767.9 L1007.9 770.2 L1006.8 772.6 L1006 775 L1005.4 777.4 L1005 779.9 L1004.8 782.4 L1004.9 784.9 L1005.1 787.3 L1005.6 789.8 L1006.2 792.2 L1007.1 794.6 L1008.2 796.9 L1009.4 799.2 L1010.9 801.4 L1012.5 803.5 L1014.3 805.5 L1016.3 807.4 L1018.5 809.2 L1020.7 810.8 L1023.2 812.3 L1025.7 813.7 L1028.4 814.9 L1031.1 816 L1033.9 816.9 L1036.9 817.6 L1039.8 818.2 L1042.8 818.6 L1045.9 818.9 L1048.9 818.9 L1051.9 818.8 L1055 818.5 L1058 818.1 L1060.9 817.4 L1063.8 816.6 L1066.6 815.7 L1069.3 814.6 L1072 813.3 L1074.5 811.9 L1076.9 810.3 L1079.1 808.7 Z"/><path d="M565.3 735.9 L567.4 734.1 L569.4 732.2 L571.1 730.1 L572.7 728 L574.1 725.8 L575.3 723.5 L576.4 721.2 L577.2 718.8 L577.8 716.3 L578.2 713.9 L578.3 711.4 L578.3 708.9 L578.1 706.4 L577.6 704 L577 701.5 L576.1 699.1 L575 696.8 L573.8 694.5 L572.3 692.4 L570.7 690.3 L568.9 688.3 L566.9 686.4 L564.7 684.6 L562.5 683 L560 681.4 L557.5 680.1 L554.8 678.9 L552.1 677.8 L549.3 676.9 L546.3 676.1 L543.4 675.5 L540.4 675.1 L537.3 674.9 L534.3 674.8 L531.3 675 L528.2 675.2 L525.2 675.7 L522.3 676.3 L519.4 677.1 L516.6 678.1 L513.9 679.2 L511.2 680.5 L508.7 681.9 L506.3 683.4 L504.1 685.1 L502 686.9 L500.1 688.8 L498.3 690.9 L496.7 693 L495.3 695.2 L494.1 697.5 L493.1 699.8 L492.3 702.2 L491.6 704.7 L491.2 707.1 L491.1 709.6 L491.1 712.1 L491.3 714.6 L491.8 717 L492.4 719.5 L493.3 721.9 L494.4 724.2 L495.6 726.5 L497.1 728.6 L498.7 730.7 L500.6 732.7 L502.5 734.6 L504.7 736.4 L507 738 L509.4 739.6 L511.9 740.9 L514.6 742.2 L517.3 743.2 L520.2 744.1 L523.1 744.9 L526 745.5 L529 745.9 L532.1 746.1 L535.1 746.2 L538.2 746 L541.2 745.8 L544.2 745.3 L547.1 744.7 L550 743.9 L552.8 742.9 L555.6 741.8 L558.2 740.5 L560.7 739.1 L563.1 737.6 L565.3 735.9 Z"/><path d="M871.5 989.9 L873.6 988.1 L875.5 986.2 L877.3 984.2 L878.9 982 L880.3 979.8 L881.5 977.5 L882.5 975.2 L883.3 972.8 L883.9 970.4 L884.3 967.9 L884.5 965.4 L884.5 962.9 L884.3 960.4 L883.8 958 L883.1 955.5 L882.3 953.2 L881.2 950.8 L879.9 948.6 L878.5 946.4 L876.8 944.3 L875 942.3 L873.1 940.4 L870.9 938.6 L868.6 937 L866.2 935.5 L863.7 934.1 L861 932.9 L858.3 931.8 L855.4 930.9 L852.5 930.1 L849.6 929.6 L846.6 929.2 L843.5 928.9 L840.5 928.9 L837.4 929 L834.4 929.3 L831.4 929.7 L828.5 930.3 L825.6 931.1 L822.8 932.1 L820 933.2 L817.4 934.5 L814.9 935.9 L812.5 937.4 L810.3 939.1 L808.2 940.9 L806.2 942.8 L804.5 944.9 L802.9 947 L801.5 949.2 L800.3 951.5 L799.2 953.8 L798.4 956.2 L797.8 958.7 L797.4 961.1 L797.2 963.6 L797.3 966.1 L797.5 968.6 L798 971.1 L798.6 973.5 L799.5 975.9 L800.6 978.2 L801.8 980.5 L803.3 982.6 L804.9 984.7 L806.7 986.7 L808.7 988.6 L810.9 990.4 L813.1 992.1 L815.6 993.6 L818.1 994.9 L820.8 996.2 L823.5 997.2 L826.3 998.1 L829.2 998.9 L832.2 999.5 L835.2 999.9 L838.2 1000.1 L841.3 1000.2 L844.3 1000.1 L847.4 999.8 L850.4 999.3 L853.3 998.7 L856.2 997.9 L859 996.9 L861.7 995.8 L864.4 994.6 L866.9 993.1 L869.3 991.6 L871.5 989.9 Z"/></clipPath>
<g clip-path="url(#profclip)"><path d="M1255 714.9 L1260.3 710.5 L1265.6 705.9 L1270.6 701.3 L1275.5 696.5 L1280.3 691.7 L1284.9 686.7 L1289.4 681.6 L1293.6 676.5 L1297.8 671.3 L1301.7 665.9 L1305.5 660.5 L1309.1 655 L1312.5 649.5 L1315.8 643.8 L1318.8 638.1 L1321.7 632.4 L1324.4 626.6 L1326.9 620.7 L1329.2 614.8 L1331.4 608.8 L1333.3 602.8 L1335 596.7 L1336.6 590.6 L1337.9 584.5 L1339.1 578.3 L1340 572.2 L1340.8 566 L1341.4 559.8 L1341.7 553.5 L1341.9 547.3 L1341.9 541.1 L1341.6 534.9 L1341.2 528.7 L1340.5 522.5 L1339.7 516.3 L1338.7 510.1 L1337.4 504 L1336 497.9 L1334.4 491.8 L1332.6 485.7 L1330.6 479.7 L1328.4 473.8 L1326 467.9 L1323.4 462 L1320.6 456.2 L1317.7 450.5 L1314.6 444.8 L1311.2 439.2 L1307.7 433.7 L1304.1 428.2 L1300.2 422.9 L1296.2 417.6 L1292 412.4 L1287.7 407.3 L1283.2 402.2 L1278.5 397.3 L1273.7 392.5 L1268.7 387.8 L1263.6 383.2 L1258.3 378.7 L1252.9 374.3 L1247.4 370.1 L1241.7 365.9 L1235.8 361.9 L1229.9 358 L1223.8 354.3 L1217.6 350.6 L1211.3 347.1 L1204.9 343.8 L1198.4 340.6 L1191.8 337.5 L1185.1 334.5 L1178.3 331.8 L1171.4 329.1 L1164.4 326.6 L1157.4 324.3 L1150.2 322.1 L1143 320 L1135.8 318.1 L1128.5 316.4 L1121.1 314.8 L1113.7 313.4 L1106.2 312.1 L1098.7 311 L1091.2 310.1 L1083.6 309.3 L1076 308.7 L1068.4 308.3 L1060.8 308 L1053.2 307.8 L1045.6 307.9 L1038 308.1 L1030.4 308.4 L1022.8 308.9 L1015.2 309.6 L1007.7 310.5 L1000.1 311.5 L992.7 312.7 L985.2 314 L977.8 315.5 L970.5 317.1 L963.2 318.9 L955.9 320.9 L948.8 323 L941.7 325.2 L934.6 327.7 L927.7 330.2 L920.8 332.9 L914.1 335.8 L907.4 338.8 L900.8 341.9 L894.3 345.2 L888 348.6 L881.7 352.2 L875.6 355.9 L869.5 359.7 L863.6 363.6 L857.9 367.7 L852.2 371.9 L846.7 376.2 L841.4 380.6 L836.2 385.2 L831.1 389.8 L826.2 394.6 L821.4 399.4 L816.8 404.4 L812.3 409.4 L808.1 414.6 L803.9 419.8 L800 425.2 L796.2 430.6 L792.6 436 L789.2 441.6 L785.9 447.2 L782.9 452.9 L780 458.7 L777.3 464.5 L774.8 470.4 L772.5 476.3 L770.4 482.3 L768.4 488.3 L766.7 494.4 L765.1 500.5 L763.8 506.6 L762.6 512.8 L761.7 518.9 L760.9 525.1 L760.3 531.3 L760 537.6 L759.8 543.8 L759.9 550 L760.1 556.2 L760.5 562.4 L761.2 568.6 L762 574.8 L763 581 L764.3 587.1 L765.7 593.2 L767.3 599.3 L769.1 605.4 L771.1 611.4 L773.3 617.3 L775.7 623.2 L778.3 629.1 L781.1 634.9 L784 640.6 L787.2 646.3 L790.5 651.9 L794 657.4 L797.6 662.9 L801.5 668.2 L805.5 673.5 L809.7 678.7 L814 683.8 L818.5 688.8 L823.2 693.8 L828 698.6 L833 703.3 L838.1 707.9 L843.4 712.4 L848.8 716.8 L854.4 721 L860 725.2 L865.9 729.2 L871.8 733.1 L877.9 736.8 L884.1 740.4 L890.4 743.9 L896.8 747.3 L903.3 750.5 L909.9 753.6 L916.6 756.5 L923.4 759.3 L930.3 762 L937.3 764.5 L944.4 766.8 L951.5 769 L958.7 771.1 L965.9 773 L973.2 774.7 L980.6 776.3 L988 777.7 L995.5 779 L1003 780.1 L1010.5 781 L1018.1 781.8 L1025.7 782.4 L1033.3 782.8 L1040.9 783.1 L1048.5 783.3 L1056.1 783.2 L1063.7 783 L1071.3 782.7 L1078.9 782.1 L1086.5 781.5 L1094 780.6 L1101.6 779.6 L1109.1 778.4 L1116.5 777.1 L1123.9 775.6 L1131.2 774 L1138.5 772.2 L1145.8 770.2 L1152.9 768.1 L1160 765.8 L1167.1 763.4 L1174 760.9 L1180.9 758.2 L1187.6 755.3 L1194.3 752.3 L1200.9 749.2 L1207.4 745.9 L1213.8 742.5 L1220 738.9 L1226.1 735.2 L1232.2 731.4 L1238.1 727.5 L1243.8 723.4 L1249.5 719.2 L1255 714.9 M1050.9 545.5L1341.9 547.3 M1050.9 545.5L1053.2 307.8 M1050.9 545.5L759.8 543.8 M1050.9 545.5L1048.5 783.3" fill="none" stroke="#3d79d6" stroke-width="1.3"/></g>
<path d="M1050.9 545.5L625.6 887.6" stroke="#3d79d6" stroke-width="1.3" />
<path d="M534.7 710.5L840.9 964.5" stroke="#2f5fc0" stroke-width="1.2" />
<path d="M989.6 494.7L894.2 571.5" stroke="#5b90e0" stroke-width="2.6" />
<path d="M989.6 494.7L1050.9 545.5" stroke="#3d79d6" stroke-width="1.2" />
<path d="M791.7 653.9 L894 571.6 L894 571.6 L894.6 574.1 L895.3 576.6 L896.1 579 L896.9 581.4 L897.8 583.8 L898.7 586.2 L899.7 588.6 L900.7 591 L901.8 593.3 L903 595.7 L904.2 598 L905.4 600.3 L906.7 602.5 L908.1 604.8 L909.5 607 L911 609.2 L912.5 611.4 L914.1 613.6 L915.7 615.7 L917.4 617.8 L919.1 619.9 L920.9 621.9 L922.7 624 L924.6 626 L926.5 627.9 L928.5 629.9 L930.5 631.8 L932.5 633.7 L934.6 635.5 L936.8 637.3 L843.4 712.4 L843.4 712.4 L841.3 710.7 L839.3 708.9 L837.3 707.1 L835.3 705.4 L833.3 703.6 L831.3 701.8 L829.4 699.9 L827.5 698.1 L825.6 696.2 L823.8 694.4 L821.9 692.5 L820.1 690.6 L818.3 688.6 L816.6 686.7 L814.8 684.7 L813.1 682.8 L811.4 680.8 L809.7 678.8 L808.1 676.8 L806.5 674.8 L804.9 672.8 L803.3 670.7 L801.8 668.6 L800.3 666.6 L798.8 664.5 L797.3 662.4 L795.9 660.3 L794.5 658.2 L793.1 656 L791.7 653.9 Z" fill="none" stroke="#d8e0ea" stroke-width="7" stroke-linejoin="round"/>
<path d="M791.7 653.9 L894 571.6 L894 571.6 L894.6 574.1 L895.3 576.6 L896.1 579 L896.9 581.4 L897.8 583.8 L898.7 586.2 L899.7 588.6 L900.7 591 L901.8 593.3 L903 595.7 L904.2 598 L905.4 600.3 L906.7 602.5 L908.1 604.8 L909.5 607 L911 609.2 L912.5 611.4 L914.1 613.6 L915.7 615.7 L917.4 617.8 L919.1 619.9 L920.9 621.9 L922.7 624 L924.6 626 L926.5 627.9 L928.5 629.9 L930.5 631.8 L932.5 633.7 L934.6 635.5 L936.8 637.3 L843.4 712.4 L843.4 712.4 L841.3 710.7 L839.3 708.9 L837.3 707.1 L835.3 705.4 L833.3 703.6 L831.3 701.8 L829.4 699.9 L827.5 698.1 L825.6 696.2 L823.8 694.4 L821.9 692.5 L820.1 690.6 L818.3 688.6 L816.6 686.7 L814.8 684.7 L813.1 682.8 L811.4 680.8 L809.7 678.8 L808.1 676.8 L806.5 674.8 L804.9 672.8 L803.3 670.7 L801.8 668.6 L800.3 666.6 L798.8 664.5 L797.3 662.4 L795.9 660.3 L794.5 658.2 L793.1 656 L791.7 653.9 Z" fill="#87a4d5"/>
<path d="M791.7 653.9 L894 571.6 L894 571.6 L894.6 574.1 L895.3 576.6 L896.1 579 L896.9 581.4 L897.8 583.8 L898.7 586.2 L899.7 588.6 L900.7 591 L901.8 593.3 L903 595.7 L904.2 598 L905.4 600.3 L906.7 602.5 L908.1 604.8 L909.5 607 L911 609.2 L912.5 611.4 L914.1 613.6 L915.7 615.7 L917.4 617.8 L919.1 619.9 L920.9 621.9 L922.7 624 L924.6 626 L926.5 627.9 L928.5 629.9 L930.5 631.8 L932.5 633.7 L934.6 635.5 L936.8 637.3 L843.4 712.4 L843.4 712.4 L841.3 710.7 L839.3 708.9 L837.3 707.1 L835.3 705.4 L833.3 703.6 L831.3 701.8 L829.4 699.9 L827.5 698.1 L825.6 696.2 L823.8 694.4 L821.9 692.5 L820.1 690.6 L818.3 688.6 L816.6 686.7 L814.8 684.7 L813.1 682.8 L811.4 680.8 L809.7 678.8 L808.1 676.8 L806.5 674.8 L804.9 672.8 L803.3 670.7 L801.8 668.6 L800.3 666.6 L798.8 664.5 L797.3 662.4 L795.9 660.3 L794.5 658.2 L793.1 656 L791.7 653.9 Z" fill="none" stroke="#0d0d0d" stroke-width="2" stroke-linejoin="round"/>
<path d="M846.7 376.2L989.6 494.7" stroke="#222" stroke-width="1.2" stroke-dasharray="6 4"/>
<path d="M431.6 726.7 L819.5 1048.4 L1076.2 842 L1081.7 841.6 L1087.2 841.2 L1092.7 840.7 L1098.2 840.1 L1103.7 839.5 L1109.1 838.8 L1114.6 838.1 L1120 837.2 L1125.4 836.3 L1130.8 835.4 L1136.2 834.3 L1141.6 833.3 L1146.9 832.1 L1152.2 830.9 L1157.5 829.6 L1162.8 828.2 L1168.1 826.8 L1173.3 825.3 L1178.5 823.7 L1183.6 822.1 L1188.7 820.4 L1193.8 818.7 L1198.9 816.9 L1203.9 815 L1208.9 813.1 L1213.9 811.1 L1218.8 809 L1223.7 806.9 L1228.5 804.7 L1233.3 802.5 L1238.1 800.2 L1242.8 797.9 L1247.5 795.4 L1252.1 793 L1256.7 790.4 L1261.2 787.9 L1265.7 785.2 L1270.1 782.5 L1274.5 779.8 L1278.9 777 L1283.1 774.1 L1287.4 771.2 L1291.5 768.2 L1295.6 765.2 L1299.7 762.2 L1303.7 759 L1307.7 755.9 L1311.5 752.7 L1315.4 749.4 L1319.1 746.1 L1322.8 742.8 L1326.5 739.4 L1330 735.9 L1333.6 732.4 L1337 728.9 L1340.4 725.3 L1343.7 721.7 L1346.9 718.1 L1350.1 714.4 L1353.2 710.6 L1356.3 706.9 L1359.2 703 L1362.1 699.2 L1364.9 695.3 L1367.7 691.4 L1370.4 687.5 L1373 683.5 L1375.5 679.5 L1378 675.4 L1380.3 671.3 L1382.7 667.2 L1384.9 663.1 L1387 658.9 L1389.1 654.8 L1391.1 650.6 L1393 646.3 L1394.9 642.1 L1396.6 637.8 L1398.3 633.5 L1399.9 629.2 L1401.4 624.8 L1402.8 620.5 L1404.2 616.1 L1405.5 611.7 L1406.7 607.3 L1407.8 602.9 L1408.8 598.4 L1409.8 594 L1410.6 589.5 L1411.4 585.1 L1412.1 580.6 L1412.7 576.1 L1413.2 571.6 L1413.7 567.1 L1414 562.6 L1414.3 558.1 L1414.5 553.6 L1414.6 549.1 L1414.7 544.6 L1414.6 540 L1414.5 535.5 L1414.2 531 L1413.9 526.5 L1413.5 522 L1413.1 517.5 L1412.5 513 L1411.9 508.5 L1411.1 504.1 L1410.3 499.6 L1409.4 495.2 L1408.5 490.7 L1407.4 486.3 L1406.3 481.9 L1405 477.5 L1403.7 473.1 L1402.3 468.7 L1400.9 464.4 L1399.3 460 L1397.7 455.7 L1396 451.4 L1394.2 447.2 L1392.4 442.9 L1390.4 438.7 L1388.4 434.5 L1386.3 430.3 L1384.1 426.2 L1381.9 422 L1379.5 418 L1377.1 413.9 L1374.6 409.9 L1372.1 405.9 L1369.4 401.9 L1366.7 398 L1364 394.1 L1361.1 390.2 L1358.2 386.4 L1355.2 382.6 L1352.1 378.8 L1349 375.1 L1345.8 371.4 L1342.5 367.8 L1339.2 364.2 L1335.8 360.6 L1332.3 357.1 L1328.8 353.7 L1325.2 350.2 L1321.5 346.9 L1317.8 343.5 L1314 340.2 L1310.2 337 L1306.3 333.8 L1302.3 330.7 L1298.3 327.6 L1294.2 324.5 L1290.1 321.5 L1285.9 318.6 L1281.6 315.7 L1277.3 312.9 L1273 310.1 L1268.6 307.4 L1264.1 304.7 L1259.6 302.1 L1255.1 299.5 L1250.5 297 L1245.9 294.6 L1241.2 292.2 L1236.4 289.9 L1231.7 287.6 L1226.8 285.4 L1222 283.2 L1217.1 281.1 L1212.2 279.1 L1207.2 277.1 L1202.2 275.2 L1197.1 273.4 L1192.1 271.6 L1187 269.9 L1181.8 268.2 L1176.6 266.7 L1171.4 265.1 L1166.2 263.7 L1161 262.3 L1155.7 260.9 L1150.4 259.7 L1145.1 258.5 L1139.7 257.3 L1134.3 256.3 L1129 255.3 L1123.5 254.3 L1118.1 253.5 L1112.7 252.7 L1107.2 252 L1101.8 251.3 L1096.3 250.7 L1090.8 250.2 L1085.3 249.7 L1079.8 249.3 L1074.3 249 L1068.8 248.7 L1063.3 248.6 L1057.7 248.4 L1052.2 248.4 L1046.7 248.4 L1041.2 248.5 L1035.6 248.7 L1030.1 248.9 L1024.6 249.2 L1019.1 249.5 L1013.6 250 L1008.1 250.5 L1002.6 251 L997.1 251.7 L991.7 252.4 L986.2 253.2 L980.8 254 L975.4 254.9 L970 255.9 L964.6 256.9 L959.3 258 L953.9 259.2 L948.6 260.4 L943.3 261.7 L938.1 263.1 L932.8 264.5 L927.6 266 L922.4 267.6 L917.3 269.2 L912.1 270.9 L907.1 272.7 L902 274.5 L897 276.4 L892 278.3 L887 280.3 L882.1 282.4 L877.2 284.5 L872.4 286.7 L867.6 288.9 L862.9 291.3 L858.1 293.6 L853.5 296 L848.9 298.5 L844.3 301.1 L839.8 303.6 L835.3 306.3 L830.9 309 L826.5 311.8 L822.2 314.6 L817.9 317.4 L813.7 320.4 L809.5 323.3 L805.4 326.3 L801.4 329.4 L797.4 332.5 L793.4 335.7 L789.6 338.9 L785.7 342.2 L782 345.5 L778.3 348.9 L774.7 352.3 L771.1 355.7 L767.6 359.2 L764.2 362.8 L760.8 366.3 L757.5 370 L754.3 373.6 L751.1 377.3 L748 381.1 L745 384.8 L742 388.7 L739.1 392.5 L736.3 396.4 L733.6 400.3 L730.9 404.3 L728.3 408.3 L725.8 412.3 L723.4 416.3 L721 420.4 L718.7 424.5 L716.5 428.6 L714.3 432.8 L712.3 437 L710.3 441.2 L708.4 445.4 L706.6 449.7 L704.8 454 L703.2 458.3 L701.6 462.6 L700.1 467 L698.6 471.3 L697.3 475.7 L696 480.1 L694.9 484.5 L693.8 488.9 L692.7 493.4 L691.8 497.8 L691 502.3 L690.2 506.7 L689.5 511.2 L688.9 515.7 L688.4 520.2 L431.6 726.7 Z" fill="none" stroke="#111" stroke-width="1.4" stroke-linejoin="round"/>
<mask id="offtop"><rect x="0" y="0" width="1564" height="1127" fill="#fff"/><path d="M431.6 726.7 L819.5 1048.4 L1076.2 842 L1081.7 841.6 L1087.2 841.2 L1092.7 840.7 L1098.2 840.1 L1103.7 839.5 L1109.1 838.8 L1114.6 838.1 L1120 837.2 L1125.4 836.3 L1130.8 835.4 L1136.2 834.3 L1141.6 833.3 L1146.9 832.1 L1152.2 830.9 L1157.5 829.6 L1162.8 828.2 L1168.1 826.8 L1173.3 825.3 L1178.5 823.7 L1183.6 822.1 L1188.7 820.4 L1193.8 818.7 L1198.9 816.9 L1203.9 815 L1208.9 813.1 L1213.9 811.1 L1218.8 809 L1223.7 806.9 L1228.5 804.7 L1233.3 802.5 L1238.1 800.2 L1242.8 797.9 L1247.5 795.4 L1252.1 793 L1256.7 790.4 L1261.2 787.9 L1265.7 785.2 L1270.1 782.5 L1274.5 779.8 L1278.9 777 L1283.1 774.1 L1287.4 771.2 L1291.5 768.2 L1295.6 765.2 L1299.7 762.2 L1303.7 759 L1307.7 755.9 L1311.5 752.7 L1315.4 749.4 L1319.1 746.1 L1322.8 742.8 L1326.5 739.4 L1330 735.9 L1333.6 732.4 L1337 728.9 L1340.4 725.3 L1343.7 721.7 L1346.9 718.1 L1350.1 714.4 L1353.2 710.6 L1356.3 706.9 L1359.2 703 L1362.1 699.2 L1364.9 695.3 L1367.7 691.4 L1370.4 687.5 L1373 683.5 L1375.5 679.5 L1378 675.4 L1380.3 671.3 L1382.7 667.2 L1384.9 663.1 L1387 658.9 L1389.1 654.8 L1391.1 650.6 L1393 646.3 L1394.9 642.1 L1396.6 637.8 L1398.3 633.5 L1399.9 629.2 L1401.4 624.8 L1402.8 620.5 L1404.2 616.1 L1405.5 611.7 L1406.7 607.3 L1407.8 602.9 L1408.8 598.4 L1409.8 594 L1410.6 589.5 L1411.4 585.1 L1412.1 580.6 L1412.7 576.1 L1413.2 571.6 L1413.7 567.1 L1414 562.6 L1414.3 558.1 L1414.5 553.6 L1414.6 549.1 L1414.7 544.6 L1414.6 540 L1414.5 535.5 L1414.2 531 L1413.9 526.5 L1413.5 522 L1413.1 517.5 L1412.5 513 L1411.9 508.5 L1411.1 504.1 L1410.3 499.6 L1409.4 495.2 L1408.5 490.7 L1407.4 486.3 L1406.3 481.9 L1405 477.5 L1403.7 473.1 L1402.3 468.7 L1400.9 464.4 L1399.3 460 L1397.7 455.7 L1396 451.4 L1394.2 447.2 L1392.4 442.9 L1390.4 438.7 L1388.4 434.5 L1386.3 430.3 L1384.1 426.2 L1381.9 422 L1379.5 418 L1377.1 413.9 L1374.6 409.9 L1372.1 405.9 L1369.4 401.9 L1366.7 398 L1364 394.1 L1361.1 390.2 L1358.2 386.4 L1355.2 382.6 L1352.1 378.8 L1349 375.1 L1345.8 371.4 L1342.5 367.8 L1339.2 364.2 L1335.8 360.6 L1332.3 357.1 L1328.8 353.7 L1325.2 350.2 L1321.5 346.9 L1317.8 343.5 L1314 340.2 L1310.2 337 L1306.3 333.8 L1302.3 330.7 L1298.3 327.6 L1294.2 324.5 L1290.1 321.5 L1285.9 318.6 L1281.6 315.7 L1277.3 312.9 L1273 310.1 L1268.6 307.4 L1264.1 304.7 L1259.6 302.1 L1255.1 299.5 L1250.5 297 L1245.9 294.6 L1241.2 292.2 L1236.4 289.9 L1231.7 287.6 L1226.8 285.4 L1222 283.2 L1217.1 281.1 L1212.2 279.1 L1207.2 277.1 L1202.2 275.2 L1197.1 273.4 L1192.1 271.6 L1187 269.9 L1181.8 268.2 L1176.6 266.7 L1171.4 265.1 L1166.2 263.7 L1161 262.3 L1155.7 260.9 L1150.4 259.7 L1145.1 258.5 L1139.7 257.3 L1134.3 256.3 L1129 255.3 L1123.5 254.3 L1118.1 253.5 L1112.7 252.7 L1107.2 252 L1101.8 251.3 L1096.3 250.7 L1090.8 250.2 L1085.3 249.7 L1079.8 249.3 L1074.3 249 L1068.8 248.7 L1063.3 248.6 L1057.7 248.4 L1052.2 248.4 L1046.7 248.4 L1041.2 248.5 L1035.6 248.7 L1030.1 248.9 L1024.6 249.2 L1019.1 249.5 L1013.6 250 L1008.1 250.5 L1002.6 251 L997.1 251.7 L991.7 252.4 L986.2 253.2 L980.8 254 L975.4 254.9 L970 255.9 L964.6 256.9 L959.3 258 L953.9 259.2 L948.6 260.4 L943.3 261.7 L938.1 263.1 L932.8 264.5 L927.6 266 L922.4 267.6 L917.3 269.2 L912.1 270.9 L907.1 272.7 L902 274.5 L897 276.4 L892 278.3 L887 280.3 L882.1 282.4 L877.2 284.5 L872.4 286.7 L867.6 288.9 L862.9 291.3 L858.1 293.6 L853.5 296 L848.9 298.5 L844.3 301.1 L839.8 303.6 L835.3 306.3 L830.9 309 L826.5 311.8 L822.2 314.6 L817.9 317.4 L813.7 320.4 L809.5 323.3 L805.4 326.3 L801.4 329.4 L797.4 332.5 L793.4 335.7 L789.6 338.9 L785.7 342.2 L782 345.5 L778.3 348.9 L774.7 352.3 L771.1 355.7 L767.6 359.2 L764.2 362.8 L760.8 366.3 L757.5 370 L754.3 373.6 L751.1 377.3 L748 381.1 L745 384.8 L742 388.7 L739.1 392.5 L736.3 396.4 L733.6 400.3 L730.9 404.3 L728.3 408.3 L725.8 412.3 L723.4 416.3 L721 420.4 L718.7 424.5 L716.5 428.6 L714.3 432.8 L712.3 437 L710.3 441.2 L708.4 445.4 L706.6 449.7 L704.8 454 L703.2 458.3 L701.6 462.6 L700.1 467 L698.6 471.3 L697.3 475.7 L696 480.1 L694.9 484.5 L693.8 488.9 L692.7 493.4 L691.8 497.8 L691 502.3 L690.2 506.7 L689.5 511.2 L688.9 515.7 L688.4 520.2 L431.6 726.7 Z" fill="#000"/></mask>
<g mask="url(#offtop)"><path d="M886.8 70.5L1570.6 637.8" stroke="#d05a5a" stroke-width="0.8"/><path d="M-3.9 1060.2L1323.9 -7.5" stroke="#70c25e" stroke-width="0.8"/></g>
<g clip-path="url(#topclip)" opacity="0.8"><path d="M886.8 70.5L1570.6 637.8" stroke="#d05a5a" stroke-width="0.8"/><path d="M-3.9 1060.2L1323.9 -7.5" stroke="#70c25e" stroke-width="0.8"/></g>
<ellipse cx="1054.2" cy="209.4" rx="9" ry="7.3" fill="none" stroke="#a9a9a9" stroke-width="3"/>
<path d="M420.6 802.3L573.7 929.3" stroke="#111" stroke-width="1.1" fill="none" /><path d="M420.6 802.3L428.4 805.4L425.1 809.4Z" fill="#111"/><path d="M573.7 929.3L565.9 926.2L569.2 922.2Z" fill="#111"/>
<path d="M534.7 710.5L412.3 808.9" stroke="#111" stroke-width="1.1" fill="none" />
<path d="M625.6 887.6L565.4 935.9" stroke="#111" stroke-width="1.1" fill="none" />
<path d="M799.8 747.4L952.9 874.4" stroke="#111" stroke-width="1.1" fill="none" /><path d="M799.8 747.4L807.6 750.5L804.3 754.5Z" fill="#111"/><path d="M952.9 874.4L945.1 871.3L948.4 867.3Z" fill="#111"/>
<path d="M840.9 964.5L959.1 869.4" stroke="#111" stroke-width="1.1" fill="none" />
<path d="M736.8 979.8L799 929.8" stroke="#111" stroke-width="1.1" fill="none" /><path d="M736.8 979.8L741.4 972.8L744.7 976.9Z" fill="#111"/><path d="M799 929.8L794.4 936.8L791.2 932.8Z" fill="#111"/>
<text x="491.3" y="871.4" font-size="14" fill="#505050" text-anchor="middle" font-weight="normal" transform="rotate(39.7 491.3 871.4)" dominant-baseline="central" >7.50</text>
<text x="869.9" y="816.7" font-size="14" fill="#3e3a33" text-anchor="middle" font-weight="normal" transform="rotate(39.7 869.9 816.7)" dominant-baseline="central" >7.50</text>
<text x="774.6" y="961.4" font-size="14" fill="#3e3a33" text-anchor="middle" font-weight="normal" transform="rotate(-38.8 774.6 961.4)" dominant-baseline="central" >3.00</text>
<text x="1160.7" y="334" font-size="14" fill="#3e3a33" text-anchor="middle" font-weight="normal" transform="rotate(14 1160.7 334)" dominant-baseline="central" >135.0°</text>
<text x="520.7" y="626.2" font-size="14" fill="#555" text-anchor="middle" font-weight="normal" transform="rotate(-38.8 520.7 626.2)" dominant-baseline="central" >25</text>
<text x="1.9" y="1043.2" font-size="14" fill="#555" text-anchor="middle" font-weight="normal" transform="rotate(-38.8 1.9 1043.2)" dominant-baseline="central" >50</text>
<circle cx="846.7" cy="376.2" r="3" fill="#f4f4f4" stroke="#777" stroke-width="0.8"/>
<path d="M851.1 372.7L856.8 365.3L860.1 369.8Z" fill="#111"/>
<path d="M620.2 892.9L636.3 899.6L621.5 906.4Z" fill="none" stroke="#8a8a8a" stroke-width="1.3"/>
<path d="M1020.9 310.4L1082 780.5" stroke="#1f66d8" stroke-width="1.4" fill="none" /><path d="M1020.9 310.4L1025.2 319.9L1019.2 320.7Z" fill="#1f66d8"/><path d="M1082 780.5L1077.7 771L1083.7 770.2Z" fill="#1f66d8"/>
<path d="M989.6 428.4L1112.8 662.6" stroke="#1f66d8" stroke-width="1.4" fill="none" /><path d="M989.6 428.4L996.9 435.9L991.6 438.6Z" fill="#1f66d8"/><path d="M1112.8 662.6L1105.5 655.1L1110.8 652.4Z" fill="#1f66d8"/>
<text x="1047" y="428" font-size="13" fill="#2c64c8" text-anchor="middle" font-weight="normal" transform="rotate(82.6 1047 428)" dominant-baseline="central" >Ø20.00</text>
<text x="1093" y="601" font-size="13" fill="#2c64c8" text-anchor="middle" font-weight="normal" transform="rotate(62.2 1093 601)" dominant-baseline="central" >Ø11.00</text>
<path d="M1051.5 546L1110.6 595.6" stroke="#3f74cc" stroke-width="1" fill="none" /><path d="M1110.6 595.6L1085.7 616.8" stroke="#3f74cc" stroke-width="1" fill="none" />
<path d="M1053.5 274L1053.5 306.6" stroke="#1d3f7a" stroke-width="1.2" fill="none" /><path d="M1053.5 274L1055.7 280L1051.3 280Z" fill="#1d3f7a"/><path d="M1053.5 306.6L1051.3 300.6L1055.7 300.6Z" fill="#1d3f7a"/>
<text x="1065" y="326" font-size="12" fill="#2d4f8a" text-anchor="middle" font-weight="normal" transform="rotate(-90 1065 326)" dominant-baseline="central" >Ø3.00</text>
<path d="M1312.6 525.2L1371.2 571.8" stroke="#1d3f7a" stroke-width="1.2" fill="none" /><path d="M1312.6 525.2L1318.7 527.2L1315.9 530.7Z" fill="#1d3f7a"/><path d="M1371.2 571.8L1365.1 569.8L1367.9 566.3Z" fill="#1d3f7a"/>
<text x="1319" y="543" font-size="12" fill="#2d4f8a" text-anchor="middle" font-weight="normal" transform="rotate(38.5 1319 543)" dominant-baseline="central" >Ø3.00</text>
<path d="M1048.5 817L1048.5 784" stroke="#1d3f7a" stroke-width="1.2" fill="none" /><path d="M1048.5 817L1046.3 811L1050.7 811Z" fill="#1d3f7a"/><path d="M1048.5 784L1050.7 790L1046.3 790Z" fill="#1d3f7a"/>
<text x="1061.5" y="803" font-size="12" fill="#2d4f8a" text-anchor="middle" font-weight="normal" transform="rotate(-90 1061.5 803)" dominant-baseline="central" >Ø3.00</text>
<path d="M730.8 519L788.3 566.9" stroke="#1d3f7a" stroke-width="1.2" fill="none" /><path d="M730.8 519L736.8 521.1L734 524.5Z" fill="#1d3f7a"/><path d="M788.3 566.9L782.3 564.8L785.1 561.4Z" fill="#1d3f7a"/>
<text x="765" y="561" font-size="12" fill="#2d4f8a" text-anchor="middle" font-weight="normal" transform="rotate(38.5 765 561)" dominant-baseline="central" >Ø3.00</text>
<path d="M504.9 686.5L562.2 733.3" stroke="#1d3f7a" stroke-width="1.2" fill="none" /><path d="M504.9 686.5L510.9 688.6L508.2 692Z" fill="#1d3f7a"/><path d="M562.2 733.3L556.2 731.2L558.9 727.8Z" fill="#1d3f7a"/>
<text x="541" y="728" font-size="12" fill="#2d4f8a" text-anchor="middle" font-weight="normal" transform="rotate(38.5 541 728)" dominant-baseline="central" >Ø3.00</text>
<path d="M798.5 965.2L882.9 965.2" stroke="#1d3f7a" stroke-width="1.2" fill="none" /><path d="M798.5 965.2L804.5 963L804.5 967.4Z" fill="#1d3f7a"/><path d="M882.9 965.2L876.9 967.4L876.9 963Z" fill="#1d3f7a"/>
<text x="862.5" y="974.5" font-size="12" fill="#2d4f8a" text-anchor="middle" font-weight="normal" transform="rotate(0 862.5 974.5)" dominant-baseline="central" >Ø3.00</text>
<circle cx="1341.9" cy="547.3" r="2.2" fill="#1d3f7a"/>
<circle cx="1053.2" cy="307.8" r="2.2" fill="#1d3f7a"/>
<circle cx="759.8" cy="543.8" r="2.2" fill="#1d3f7a"/>
<circle cx="1048.5" cy="783.3" r="2.2" fill="#1d3f7a"/>
<circle cx="534.7" cy="710.5" r="2.2" fill="#1d3f7a"/>
<circle cx="840.9" cy="964.5" r="2.2" fill="#1d3f7a"/>
<g transform="translate(956.3 456) rotate(39.7)" fill="none" stroke="#6f9de2" stroke-width="1"><path d="M-8 -3.5H8M-7.5 -1V3.5H7.5V-1M-4 3.5V1.5M-1 3.5V1.5M2 3.5V1.5M5 3.5V1.5"/></g>
<g transform="translate(1027.9 515.2) rotate(39.7)" fill="none" stroke="#6f9de2" stroke-width="1"><path d="M-8 -3.5H8M-7.5 -1V3.5H7.5V-1M-4 3.5V1.5M-1 3.5V1.5M2 3.5V1.5M5 3.5V1.5"/></g>
<g transform="translate(1089.8 564.7) rotate(39.7)" fill="none" stroke="#6f9de2" stroke-width="1"><path d="M-8 -3.5H8M-7.5 -1V3.5H7.5V-1M-4 3.5V1.5M-1 3.5V1.5M2 3.5V1.5M5 3.5V1.5"/></g>
<g transform="translate(804.6 630) rotate(-38.8)" fill="none" stroke="#b0a693" stroke-width="1"><path d="M-8 -3.5H8M-7.5 -1V3.5H7.5V-1M-4 3.5V1.5M-1 3.5V1.5M2 3.5V1.5M5 3.5V1.5"/></g>
<g transform="translate(865.9 682.2) rotate(-38.8)" fill="none" stroke="#a9c0e6" stroke-width="1"><path d="M-8 -3.5H8M-7.5 -1V3.5H7.5V-1M-4 3.5V1.5M-1 3.5V1.5M2 3.5V1.5M5 3.5V1.5"/></g>
<g transform="translate(927.7 732) rotate(-38.8)" fill="none" stroke="#6f9de2" stroke-width="1"><path d="M-8 -3.5H8M-7.5 -1V3.5H7.5V-1M-4 3.5V1.5M-1 3.5V1.5M2 3.5V1.5M5 3.5V1.5"/></g>
<g transform="translate(674.8 798) rotate(39.7)" fill="none" stroke="#6f9de2" stroke-width="1"><path d="M-8 -3.5H8M-7.5 -1V3.5H7.5V-1M-4 3.5V1.5M-1 3.5V1.5M2 3.5V1.5M5 3.5V1.5"/></g>
<g transform="translate(736.1 849.9) rotate(39.7)" fill="none" stroke="#6f9de2" stroke-width="1"><path d="M-8 -3.5H8M-7.5 -1V3.5H7.5V-1M-4 3.5V1.5M-1 3.5V1.5M2 3.5V1.5M5 3.5V1.5"/></g>
<ellipse cx="1051.2" cy="559" rx="6.5" ry="6" fill="none" stroke="#6f9be0" stroke-width="1.1"/><ellipse cx="1051.2" cy="559" rx="3.3" ry="3" fill="none" stroke="#6f9be0" stroke-width="1.1"/>
<rect x="0" y="0" width="1564" height="6" fill="#8cc53f"/>
<rect x="0" y="10" width="940" height="60" fill="#e0e0e0"/>
<rect x="0" y="10" width="109" height="60" fill="#adadad"/>
<path d="M4.5 28V50M8.5 28V50" stroke="#8e8e8e" stroke-width="1"/><path d="M5.5 28V50M9.5 28V50" stroke="#c4c4c4" stroke-width="1"/>
<text x="53.7" y="44" font-size="11.5" font-weight="bold" fill="#ffffff" text-anchor="middle" textLength="32.5" lengthAdjust="spacingAndGlyphs">モデル</text><path d="M75 39h5.5l-2.75 3.3z" fill="#fff"/>
<path d="M243 15V65" stroke="#c9c9c9" stroke-width="1.2"/>
<path d="M335 15V65" stroke="#c9c9c9" stroke-width="1.2"/>
<path d="M389 15V65" stroke="#c9c9c9" stroke-width="1.2"/>
<path d="M480.5 15V65" stroke="#c9c9c9" stroke-width="1.2"/>
<path d="M534.5 15V65" stroke="#c9c9c9" stroke-width="1.2"/>
<path d="M589 15V65" stroke="#c9c9c9" stroke-width="1.2"/>
<path d="M643.5 15V65" stroke="#c9c9c9" stroke-width="1.2"/>
<path d="M707 15V65" stroke="#c9c9c9" stroke-width="1.2"/>
<path d="M780.5 15V65" stroke="#c9c9c9" stroke-width="1.2"/>
<path d="M835 15V65" stroke="#c9c9c9" stroke-width="1.2"/>
<rect x="788.5" y="14.5" width="39" height="38.5" fill="#5a8bc1"/>
<text x="168.8" y="64.5" font-size="11" fill="#4a4a4a" text-anchor="middle" textLength="43.5" lengthAdjust="spacingAndGlyphs">スケッチ</text>
<path d="M194 57.8h5.6l-2.8 3.6z" fill="#333"/>
<text x="282.8" y="64.5" font-size="11" fill="#4a4a4a" text-anchor="middle" textLength="21" lengthAdjust="spacingAndGlyphs">作成</text>
<path d="M296.5 57.8h5.6l-2.8 3.6z" fill="#333"/>
<text x="357.6" y="64.5" font-size="11" fill="#4a4a4a" text-anchor="middle" textLength="21" lengthAdjust="spacingAndGlyphs">修正</text>
<path d="M371.3 57.8h5.6l-2.8 3.6z" fill="#333"/>
<text x="427.8" y="64.5" font-size="11" fill="#4a4a4a" text-anchor="middle" textLength="53.5" lengthAdjust="spacingAndGlyphs">アセンブリ</text>
<path d="M457.8 57.8h5.6l-2.8 3.6z" fill="#333"/>
<text x="503.4" y="64.5" font-size="11" fill="#4a4a4a" text-anchor="middle" textLength="21" lengthAdjust="spacingAndGlyphs">構築</text>
<path d="M517.6 57.8h5.6l-2.8 3.6z" fill="#333"/>
<text x="557.6" y="64.5" font-size="11" fill="#4a4a4a" text-anchor="middle" textLength="21.5" lengthAdjust="spacingAndGlyphs">検査</text>
<path d="M571.3 57.8h5.6l-2.8 3.6z" fill="#333"/>
<text x="611.6" y="64.5" font-size="11" fill="#4a4a4a" text-anchor="middle" textLength="21" lengthAdjust="spacingAndGlyphs">挿入</text>
<path d="M625 57.8h5.6l-2.8 3.6z" fill="#333"/>
<text x="670.3" y="64.5" font-size="11" fill="#4a4a4a" text-anchor="middle" textLength="31" lengthAdjust="spacingAndGlyphs">メイク</text>
<path d="M688.7 57.8h5.6l-2.8 3.6z" fill="#333"/>
<text x="740.7" y="64.5" font-size="11" fill="#4a4a4a" text-anchor="middle" textLength="44.5" lengthAdjust="spacingAndGlyphs">アドイン</text>
<path d="M764.4 57.8h5.6l-2.8 3.6z" fill="#333"/>
<text x="803.5" y="64.5" font-size="11" fill="#4a4a4a" text-anchor="middle" textLength="21.5" lengthAdjust="spacingAndGlyphs">選択</text>
<path d="M817.4 57.8h5.6l-2.8 3.6z" fill="#333"/>
<text x="884" y="64.5" font-size="11" fill="#4a4a4a" text-anchor="middle" textLength="75.5" lengthAdjust="spacingAndGlyphs">スケッチを停止</text>
<defs><linearGradient id="g1" x1="0" y1="0" x2="0" y2="1"><stop offset="0" stop-color="#fafafa"/><stop offset="1" stop-color="#a9b0c2"/></linearGradient><linearGradient id="gb" x1="0" y1="0" x2="0" y2="1"><stop offset="0" stop-color="#c9dbf2"/><stop offset="1" stop-color="#6f98cf"/></linearGradient></defs>
<rect x="119.5" y="20.5" width="26" height="26" fill="url(#g1)" stroke="#333" stroke-width="1.2"/>
<path d="M122.5 23v20h16" fill="none" stroke="#555" stroke-width="1"/><rect x="122" y="40.5" width="3" height="3" fill="#3a66c8"/>
<path d="M131.5 32l10-10 3 3-10 10-4 0.5z" fill="#f2c230" stroke="#333" stroke-width="1"/><path d="M141.5 22l1.5-1.5 3 3-1.5 1.5z" fill="#c9a37a" stroke="#333" stroke-width="0.8"/>
<path d="M141 36v12M135 42h12" stroke="#222" stroke-width="4.8"/><path d="M141 36.8v10.4M135.8 42h10.4" stroke="#fff" stroke-width="2.4"/>
<rect x="162.5" y="25.5" width="27" height="17" fill="url(#g1)" stroke="#333" stroke-width="1.2"/><rect x="187" y="23" width="4.5" height="4.5" fill="#2d5bd0"/><rect x="161" y="41" width="4.5" height="4.5" fill="#2d5bd0"/>
<circle cx="219" cy="33" r="14.5" fill="url(#g1)" stroke="#333" stroke-width="1.3"/><path d="M209 43L229 22" stroke="#333" stroke-width="1"/><path d="M216.5 30.5l5 5M221.5 30.5l-5 5" stroke="#333" stroke-width="1"/><rect x="227.5" y="19.5" width="4.5" height="4.5" fill="#2d5bd0"/>
<path d="M254 22l4-4h17v25l-4 4h-17z" fill="url(#gb)" stroke="#333" stroke-width="1.2"/><path d="M254 22h17v25M271 22l4-4" fill="none" stroke="#333" stroke-width="1"/><path d="M254.5 41h16" stroke="#e0ecfa" stroke-width="1.5"/>
<path d="M280.5 43V20" stroke="#222" stroke-width="1.3"/><path d="M277.5 23.5l3-5 3 5z" fill="#222"/>
<rect x="296.5" y="18.5" width="25" height="24" rx="5" fill="#b97de6" stroke="#6a3a9a" stroke-width="1.2"/><path d="M302.5 19v23M308.5 19v23M314.5 19v23M297 24.5h24M297 30.5h24M297 36.5h24" stroke="#7e44b0" stroke-width="0.9"/>
<rect x="315.5" y="37.5" width="10" height="10" fill="#e8e8e8" stroke="#333" stroke-width="1.1"/><path d="M318 42.5h5M321 40l2.5 2.5-2.5 2.5" stroke="#222" stroke-width="1.3" fill="none"/>
<path d="M348 23l4-5h5v29h-9z" fill="#f4f4f4" stroke="#333" stroke-width="1.2"/><path d="M352 23l4-5h17v24l-4 5h-17z" fill="url(#gb)" stroke="#333" stroke-width="1.2"/><path d="M352 23h17v24M369 23l4-5" fill="none" stroke="#333"/><path d="M373 31h3v-2.5l4 4-4 4v-2.5h-3z" fill="#222"/>
<rect x="398.5" y="36.5" width="13" height="11" fill="#e3e6ea" stroke="#333" stroke-width="1.1"/><path d="M411.5 36.5l3-3h10l3 3v11h-16z" fill="#e3e6ea" stroke="#333" stroke-width="1.1"/><path d="M398.5 36.5l3-3v-10h11v13z" fill="url(#gb)" stroke="#333" stroke-width="1.1"/>
<path d="M402 18v9M397.5 22.5h9" stroke="#222" stroke-width="4"/><path d="M402 18.5v8M398 22.5h8" stroke="#fff" stroke-width="2"/>
<path d="M444 44l2-22 6-3v21l-6 6z" fill="#dfe2e6" stroke="#333" stroke-width="1.1"/><path d="M460 27l6-2 5 6v13l-5 3v-14z" fill="#dfe2e6" stroke="#333" stroke-width="1.1"/><ellipse cx="449.5" cy="21" rx="2.6" ry="2.3" fill="#f3f3f3" stroke="#333"/><rect x="457.5" y="33" width="5" height="10" rx="2" fill="#e6e6e6" stroke="#333"/><path d="M459.5 28v4M459.5 38v6" stroke="#e8903a" stroke-width="1.3"/>
<path d="M494 26l5-5h8v25h-13z" fill="#e9e9ec" stroke="#333" stroke-width="1.1"/><path d="M502 26l5-5v21l-5 5z" fill="#4a9a44" stroke="#333" stroke-width="1.1"/><path d="M494 26h8v21" fill="none" stroke="#333"/><path d="M514 29l8-9v19l-8 9z" fill="#ee9a58" stroke="#333" stroke-width="1.1"/>
<path d="M547.5 26v4M575.5 26v4M547.5 28h28" stroke="#333" stroke-width="1.1"/><rect x="547.5" y="36" width="28" height="5.5" rx="1" fill="#f3c233" stroke="#b08020" stroke-width="0.9"/>
<defs><linearGradient id="sky" x1="0" y1="0" x2="0" y2="1"><stop offset="0" stop-color="#a8c8ea"/><stop offset="1" stop-color="#e8f0f8"/></linearGradient></defs>
<rect x="601.5" y="18.5" width="29" height="29" fill="url(#sky)" stroke="#333" stroke-width="1.2"/><circle cx="622" cy="26" r="2.8" fill="#fffbe0"/><path d="M602 47l10-15 6 4 4-3 8 14z" fill="#8f96a0"/><path d="M602 47l10-15 5 5 2 10z" fill="#5f6570"/>
<rect x="660.5" y="20.5" width="29" height="26" rx="3" fill="#eeeeee" stroke="#333" stroke-width="1.2"/><rect x="663" y="29" width="24" height="15" fill="#55585e"/><path d="M666 42l3-6h12l3 6z" fill="#e0e4ea"/><path d="M673 29h4v6l-2 2-2-2z" fill="#4f8ee0"/><circle cx="685" cy="24.5" r="0.9" fill="#2a8a2a"/>
<rect x="729.5" y="20.5" width="23" height="21" fill="url(#g1)" stroke="#333" stroke-width="1.1"/><rect x="730" y="21" width="22" height="3" fill="#9aa0aa"/><path d="M733 30l3 1.5-3 1.5M737 32h4" stroke="#333" stroke-width="0.9" fill="none"/>
<circle cx="752" cy="41" r="6" fill="#dde6f5" stroke="#2c4a90" stroke-width="2.6" stroke-dasharray="2.2 1.6"/><circle cx="752" cy="41" r="2" fill="#fff" stroke="#2c4a90" stroke-width="1"/>
<rect x="793" y="18.5" width="20.5" height="15" fill="none" stroke="#47a03a" stroke-width="1.6"/><path d="M814 32.5v13l3-3 2.5 5 2-1-2.5-5h4z" fill="#fff" stroke="#222" stroke-width="1"/>
<path d="M872 33l13-13 17 9-13 13z" fill="#c8ccd4" stroke="#333" stroke-width="1.1"/><path d="M876.3 28.7l17 9M880.6 24.4l17 9M877.7 36l13-13M883.3 39l13-13" stroke="#666" stroke-width="0.8"/><path d="M884 40l5 5 10-11" fill="none" stroke="#4a9a2a" stroke-width="3.5"/>
<rect x="0" y="74.5" width="297.5" height="23.5" fill="#d4d4d4" stroke="#b3b3b3" stroke-width="1"/>
<path d="M3 87l4-3v6zM8 87l4-3v6z" fill="#333"/>
<text x="26" y="90.5" font-size="11" fill="#8a8a8a" textLength="42.5" lengthAdjust="spacingAndGlyphs">ブラウザ</text>
<circle cx="281.3" cy="86.3" r="4.8" fill="#222"/><path d="M278.8 86.3h5" stroke="#fff" stroke-width="1.4"/><path d="M293.5 80v12" stroke="#999" stroke-width="1"/>
<rect x="34" y="104" width="136" height="20" fill="#c2c2c2"/><rect x="34" y="104" width="111" height="20" fill="#8b8b8b"/>
<path d="M15 119.5h10.5v-11z" fill="#9a9a9a" stroke="#222" stroke-width="1"/>
<rect x="42.5" y="116.5" width="4" height="4.5" rx="1" fill="#b8b8b8" stroke="#777" stroke-width="0.5"/><circle cx="44.5" cy="112.2" r="5" fill="#f5e06a" stroke="#8a8a6a" stroke-width="0.8"/>
<path d="M62.5 109l3-3h12v14l-3 3h-12z" fill="#f0f0f0" stroke="#555" stroke-width="0.9"/><path d="M62.5 109h12v14M74.5 109l3-3" fill="none" stroke="#555" stroke-width="0.9"/>
<text x="92" y="118" font-size="11.5" font-weight="bold" fill="#fff" textLength="41.5" lengthAdjust="spacingAndGlyphs">(未保存)</text>
<circle cx="155.4" cy="114" r="5.2" fill="#fff" stroke="#333" stroke-width="1.2"/><circle cx="155.4" cy="114" r="2.1" fill="#222"/>
<rect x="52" y="128" width="97.5" height="19.7" fill="#cbcbcb"/>
<path d="M35 131.5v13l8-6.5z" fill="#fafafa" stroke="#222" stroke-width="1.2"/>
<path d="M55.5 132.5h5l1.5 2h8v10h-14.5z" fill="#f4f4f4" stroke="#444" stroke-width="0.9"/>
<text x="85" y="142" font-size="11.5" fill="#444" textLength="54" lengthAdjust="spacingAndGlyphs">ビュー管理</text>
<rect x="52" y="152" width="94" height="19.7" fill="#cbcbcb"/>
<path d="M55.5 155.5h9l4 4v11h-13z" fill="#f6f6f6" stroke="#444" stroke-width="0.9"/><rect x="55" y="167" width="14" height="2.5" fill="#e8a020"/>
<text x="85" y="166" font-size="11.5" fill="#444" textLength="49.5" lengthAdjust="spacingAndGlyphs">単位: mm</text>
<rect x="52" y="176" width="91" height="19.7" fill="#cbcbcb"/>
<path d="M35 179.5v13l8-6.5z" fill="#fafafa" stroke="#222" stroke-width="1.2"/>
<rect x="60.3" y="188.5" width="4" height="4.5" rx="1" fill="#b8b8b8" stroke="#777" stroke-width="0.5"/><circle cx="62.3" cy="184.2" r="5" fill="#c8d8f0" stroke="#8a8a6a" stroke-width="0.8"/>
<path d="M80 180.5h5l1.5 2h8v10h-14.5z" fill="#f4f4f4" stroke="#444" stroke-width="0.9"/>
<text x="110" y="190" font-size="11.5" fill="#444" textLength="21.5" lengthAdjust="spacingAndGlyphs">原点</text>
<rect x="52" y="200" width="98.5" height="19.7" fill="#cbcbcb"/>
<path d="M35 203.5v13l8-6.5z" fill="#fafafa" stroke="#222" stroke-width="1.2"/>
<rect x="60.3" y="212.5" width="4" height="4.5" rx="1" fill="#b8b8b8" stroke="#777" stroke-width="0.5"/><circle cx="62.3" cy="208.2" r="5" fill="#f5e06a" stroke="#8a8a6a" stroke-width="0.8"/>
<path d="M80 204.5h5l1.5 2h8v10h-14.5z" fill="#f4f4f4" stroke="#444" stroke-width="0.9"/>
<text x="110" y="214" font-size="11.5" fill="#444" textLength="31" lengthAdjust="spacingAndGlyphs">ボディ</text>
<rect x="52" y="224" width="110.5" height="19.7" fill="#cbcbcb"/>
<path d="M35 227.5v13l8-6.5z" fill="#fafafa" stroke="#222" stroke-width="1.2"/>
<rect x="60.3" y="236.5" width="4" height="4.5" rx="1" fill="#b8b8b8" stroke="#777" stroke-width="0.5"/><circle cx="62.3" cy="232.2" r="5" fill="#f5e06a" stroke="#8a8a6a" stroke-width="0.8"/>
<path d="M80 228.5h5l1.5 2h8v10h-14.5z" fill="#f4f4f4" stroke="#444" stroke-width="0.9"/>
<text x="110" y="238" font-size="11.5" fill="#444" textLength="43.5" lengthAdjust="spacingAndGlyphs">スケッチ</text>
<path d="M78 245l3-3M84 245l3-3M90 245l3-3M96 245l3-3M102 245l3-3M108 245l3-3M114 245l3-3M120 245l3-3M126 245l3-3M132 245l3-3M138 245l3-3M144 245l3-3M150 245l3-3M156 245l3-3" stroke="#7a8aa8" stroke-width="1.3"/>
</svg>
</body></html>
